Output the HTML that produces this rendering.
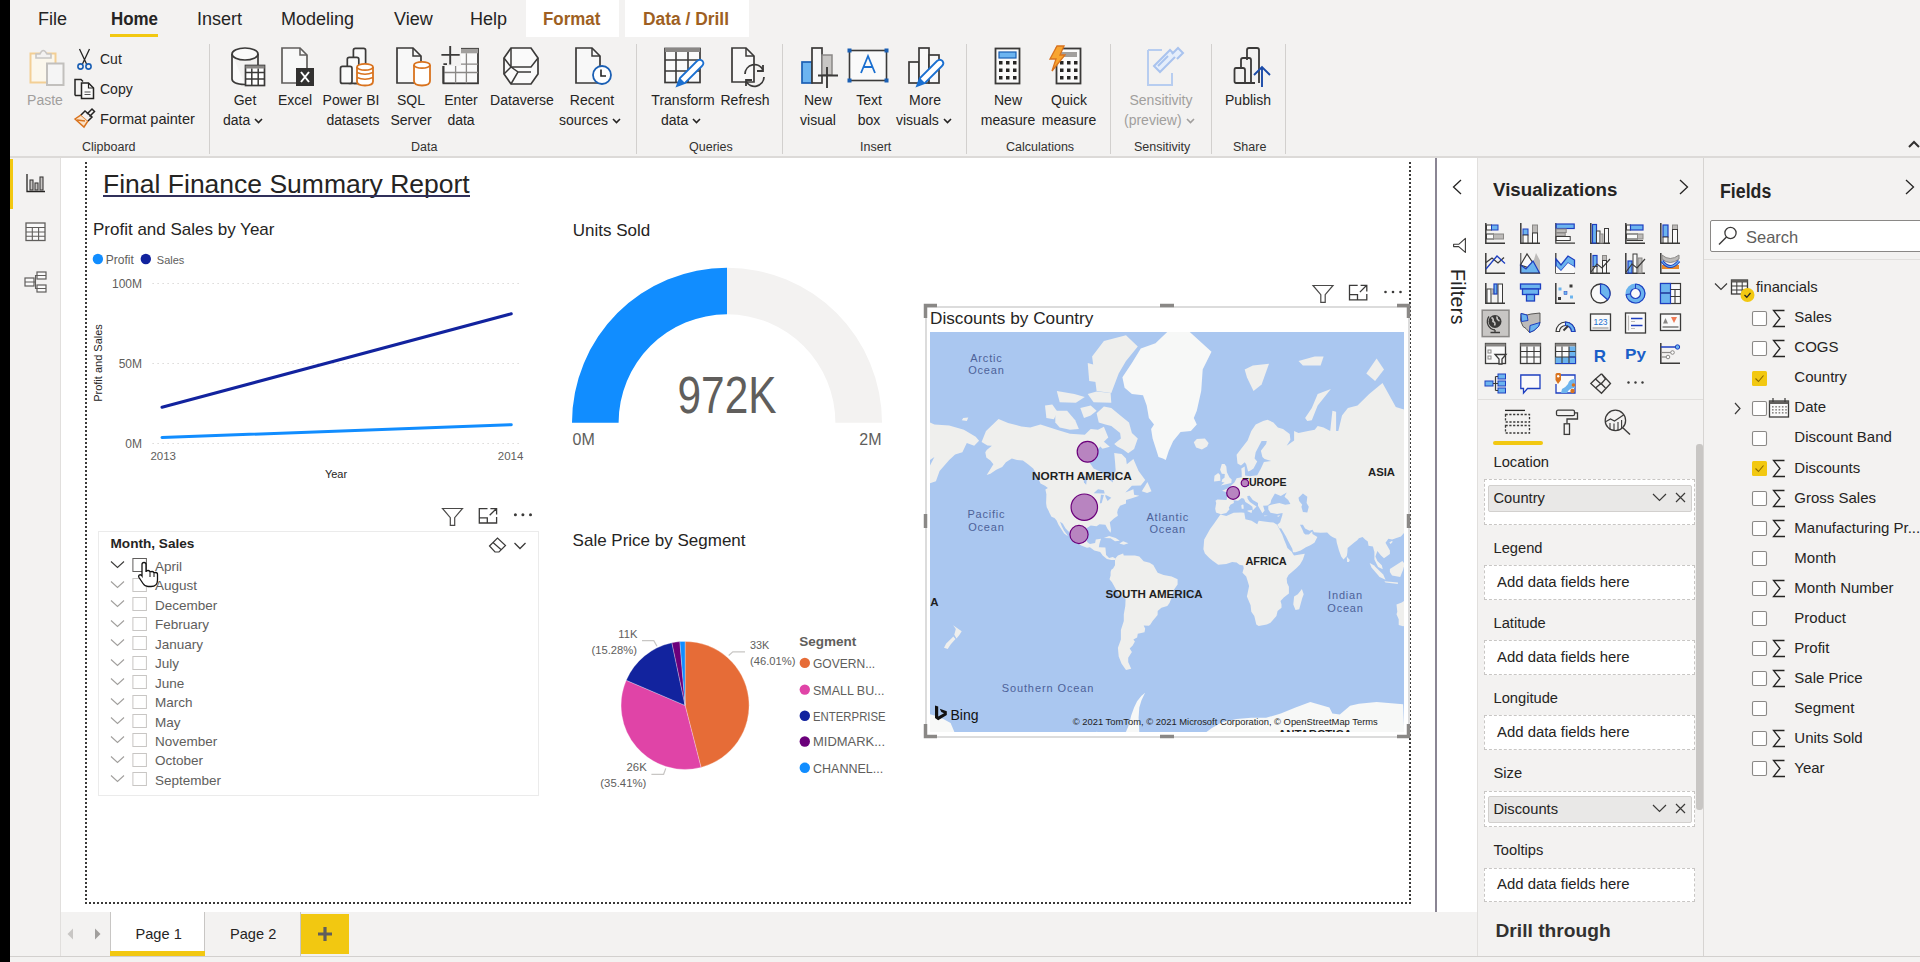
<!DOCTYPE html>
<html><head><meta charset="utf-8">
<style>
*{box-sizing:border-box}
html,body{margin:0;padding:0}
body{width:1920px;height:962px;overflow:hidden;position:relative;background:#f3f2f1;font-family:"Liberation Sans",sans-serif;color:#252423}
.a{position:absolute;white-space:nowrap}
.t14{font-size:14px;line-height:16px}
.rb{color:#252423}
.sep{position:absolute;top:44px;width:1px;height:110px;background:#d2d0ce}
.glbl{position:absolute;top:140px;font-size:12.5px;line-height:14px;color:#323130}
.tab{position:absolute;top:8px;font-size:18px;line-height:22px;color:#252423}
.dot{position:absolute;background:#252423}
</style></head><body>
<!-- black strip -->
<div class="a" style="left:0;top:0;width:10px;height:962px;background:#000"></div>
<!-- ribbon tabs -->
<div class="a" style="left:526px;top:0;width:93px;height:37px;background:#fff"></div>
<div class="a" style="left:625px;top:0;width:124px;height:37px;background:#fff"></div>
<div class="tab" style="left:38px">File</div>
<div class="tab" style="left:111px;font-weight:bold;font-size:18px;top:8px;transform:scaleX(0.94);transform-origin:0 0">Home</div>
<div class="a" style="left:110px;top:34px;width:48px;height:3px;background:#f2c811"></div>
<div class="tab" style="left:197px">Insert</div>
<div class="tab" style="left:281px">Modeling</div>
<div class="tab" style="left:394px">View</div>
<div class="tab" style="left:470px">Help</div>
<div class="tab" style="left:543px;font-weight:bold;font-size:18px;top:8px;color:#9e5f22;transform:scaleX(0.94);transform-origin:0 0">Format</div>
<div class="tab" style="left:643px;font-weight:bold;font-size:18px;top:8px;color:#9e5f22;transform:scaleX(0.966);transform-origin:0 0">Data / Drill</div>
<!-- ribbon bottom border -->
<div class="a" style="left:10px;top:156px;width:1910px;height:2px;background:#dcdad8"></div>
<!-- Clipboard -->
<svg class="a" style="left:28px;top:46px" width="38" height="42" viewBox="0 0 38 42">
 <rect x="2.5" y="7.5" width="25" height="29" fill="#fbf7ec" stroke="#f3cf95" stroke-width="2"/>
 <path d="M8 12 L8 8 L12 8 Q15 1 19 8 L23 8 L23 12 Z" fill="#f3f2f1" stroke="#c8c6c4" stroke-width="1.6"/>
 <rect x="19" y="17.5" width="16.5" height="21.5" fill="#f5f5f5" stroke="#c2c0bd" stroke-width="2"/>
</svg>
<div class="a t14" style="left:27px;top:92px;color:#a19f9d;width:36px;text-align:center;font-size:14px">Paste</div>
<svg class="a" style="left:76px;top:48px" width="17" height="23" viewBox="0 0 17 23">
 <path d="M3.5 1 L11 17 M13.5 1 L6 17" stroke="#252423" stroke-width="1.3" fill="none"/>
 <circle cx="4.5" cy="18.5" r="2.6" fill="none" stroke="#1a5fb4" stroke-width="1.6"/>
 <circle cx="12.5" cy="18.5" r="2.6" fill="none" stroke="#1a5fb4" stroke-width="1.6"/>
</svg>
<div class="a t14" style="left:100px;top:51px">Cut</div>
<svg class="a" style="left:73px;top:78px" width="23" height="22" viewBox="0 0 23 22">
 <path d="M2 17.5 L2 1.5 L8 1.5 L10 3.5" fill="none" stroke="#252423" stroke-width="1.5"/>
 <path d="M2 17.5 L8.5 17.5" stroke="#252423" stroke-width="1.5"/>
 <path d="M8.5 5 L15.5 5 L20.5 10 L20.5 20.5 L8.5 20.5 Z" fill="#fafafa" stroke="#252423" stroke-width="1.5"/>
 <path d="M15.5 5 L15.5 10 L20.5 10" fill="none" stroke="#252423" stroke-width="1.2"/>
 <path d="M11.5 14 L17.5 14 M11.5 16.5 L17.5 16.5" stroke="#555" stroke-width="1"/>
</svg>
<div class="a t14" style="left:100px;top:81px">Copy</div>
<svg class="a" style="left:73px;top:107px" width="23" height="23" viewBox="0 0 23 23">
 <path d="M2 12 L11 20 L15 14 L8 8 Z" fill="#fbe3c8" stroke="#d9731e" stroke-width="1.5"/>
 <path d="M4 13 L12 14" stroke="#d9731e" stroke-width="1.5"/>
 <path d="M8 8 L12 4 L19 10 L15 14" fill="#f3f2f1" stroke="#252423" stroke-width="1.5"/>
 <path d="M14 7 L19 2 L21.5 4.5 L16.5 9.5" fill="none" stroke="#252423" stroke-width="1.5"/>
</svg>
<div class="a t14" style="left:100px;top:111px;font-size:14.6px">Format painter</div>
<div class="glbl" style="left:82px">Clipboard</div>
<div class="sep" style="left:209px"></div>
<!-- Data group -->
<svg class="a" style="left:229px;top:46px" width="40" height="42" viewBox="0 0 40 42">
 <path d="M3 8 L3 33 Q3 38 16 38.5" fill="#fafafa" stroke="#3b3a39" stroke-width="1.7"/>
 <ellipse cx="16" cy="8" rx="13" ry="6" fill="#fafafa" stroke="#3b3a39" stroke-width="1.7"/>
 <path d="M29 8 L29 19" stroke="#3b3a39" stroke-width="1.7"/>
 <rect x="16.5" y="19.5" width="19" height="20" fill="#fff" stroke="#3b3a39" stroke-width="1.7"/>
 <rect x="16.5" y="19.5" width="19" height="3" fill="#8a8886"/>
 <path d="M16.5 26.5 H35.5 M16.5 33 H35.5 M22.8 22.5 V39.5 M29.2 22.5 V39.5" stroke="#3b3a39" stroke-width="1.5"/>
</svg>
<div class="a t14" style="left:205px;top:92px;width:80px;text-align:center">Get</div>
<div class="a t14" style="left:223px;top:112px">data<svg width="11" height="8" style="margin-left:3px" viewBox="0 0 11 8"><path d="M2 2 L5.5 5.5 L9 2" fill="none" stroke="#252423" stroke-width="1.6"/></svg></div>
<svg class="a" style="left:280px;top:46px" width="38" height="42" viewBox="0 0 38 42">
 <path d="M2 2 L20 2 L27 9 L27 37 L2 37 Z" fill="#f8f8f8" stroke="#605e5c" stroke-width="1.7"/>
 <path d="M20 2 L20 9 L27 9" fill="none" stroke="#605e5c" stroke-width="1.5"/>
 <rect x="16" y="22" width="18" height="18" fill="#323130"/>
 <path d="M21 26 L29 36 M29 26 L21 36" stroke="#fff" stroke-width="2"/>
</svg>
<div class="a t14" style="left:255px;top:92px;width:80px;text-align:center">Excel</div>
<svg class="a" style="left:339px;top:46px" width="36" height="42" viewBox="0 0 36 42">
 <rect x="14.4" y="2.4" width="12.2" height="35" rx="2" fill="#fafafa" stroke="#3b3a39" stroke-width="1.7"/>
 <rect x="8.3" y="11.3" width="11.5" height="26" rx="2" fill="#fafafa" stroke="#3b3a39" stroke-width="1.7"/>
 <rect x="1.5" y="20.4" width="11.5" height="17" rx="2" fill="#fafafa" stroke="#3b3a39" stroke-width="1.7"/>
 <path d="M18 21 L18 35.5 Q18 39.5 26 39.5 Q34 39.5 34 35.5 L34 21" fill="#fff" stroke="#d9731e" stroke-width="1.8"/>
 <ellipse cx="26" cy="21" rx="8" ry="3.2" fill="#fff" stroke="#d9731e" stroke-width="1.8"/>
 <path d="M18 26.5 Q26 30 34 26.5 M18 31.5 Q26 35 34 31.5" fill="none" stroke="#d9731e" stroke-width="1.6"/>
</svg>
<div class="a t14" style="left:311px;top:92px;width:80px;text-align:center">Power BI</div>
<div class="a t14" style="left:313px;top:112px;width:80px;text-align:center">datasets</div>
<svg class="a" style="left:395px;top:46px" width="38" height="42" viewBox="0 0 38 42">
 <path d="M2 2 L18 2 L26 10 L26 37 L2 37 Z" fill="#f8f8f8" stroke="#3b3a39" stroke-width="1.7"/>
 <path d="M18 2 L18 10 L26 10" fill="none" stroke="#3b3a39" stroke-width="1.5"/>
 <path d="M19 19 L19 35 Q19 39.5 27 39.5 Q35 39.5 35 35 L35 19" fill="#fff" stroke="#d9731e" stroke-width="1.8"/>
 <ellipse cx="27" cy="19" rx="8" ry="3.2" fill="#fff" stroke="#d9731e" stroke-width="1.8"/>
</svg>
<div class="a t14" style="left:371px;top:92px;width:80px;text-align:center">SQL</div>
<div class="a t14" style="left:371px;top:112px;width:80px;text-align:center">Server</div>
<svg class="a" style="left:439px;top:44px" width="42" height="44" viewBox="0 0 42 44">
 <rect x="4.4" y="4.8" width="34.6" height="34.5" fill="#fafafa" stroke="#3b3a39" stroke-width="1.8"/>
 <rect x="16" y="4.8" width="23" height="4.5" fill="#a19f9d"/>
 <path d="M4.4 20.1 H39 M4.4 28.5 H39 M16.6 9.3 V39.3 M27.4 9.3 V39.3" stroke="#8a8886" stroke-width="1.3"/>
 <rect x="0" y="0" width="22" height="22" fill="#f3f2f1"/>
 <path d="M4.4 22 V39.3 M4.4 20.1 H8" stroke="#3b3a39" stroke-width="1.8"/>
 <path d="M11.2 2 V20.4 M2.4 10.9 H20.7" stroke="#3b3a39" stroke-width="1.9"/>
</svg>
<div class="a t14" style="left:421px;top:92px;width:80px;text-align:center">Enter</div>
<div class="a t14" style="left:421px;top:112px;width:80px;text-align:center">data</div>
<svg class="a" style="left:501px;top:46px" width="40" height="40" viewBox="0 0 40 40">
 <path d="M10 2 L30 2 L37 12 L37 28 L30 38 L10 38 L3 28 L3 12 Z" fill="#fafafa" stroke="#3b3a39" stroke-width="1.7"/>
 <path d="M3 12 L10 21 L30 21 L37 12 M10 2 L10 21 M10 21 L3 28 M10 21 L17 26 L10 38 M17 26 L30 26" fill="none" stroke="#3b3a39" stroke-width="1.5"/>
</svg>
<div class="a t14" style="left:482px;top:92px;width:80px;text-align:center">Dataverse</div>
<svg class="a" style="left:574px;top:46px" width="40" height="42" viewBox="0 0 40 42">
 <path d="M2 2 L18 2 L26 10 L26 37 L2 37 Z" fill="#f8f8f8" stroke="#3b3a39" stroke-width="1.7"/>
 <path d="M18 2 L18 10 L26 10" fill="none" stroke="#3b3a39" stroke-width="1.5"/>
 <circle cx="28" cy="29" r="9" fill="#fff" stroke="#1a5fb4" stroke-width="1.8"/>
 <path d="M27 23.5 L27 30 L32 30" fill="none" stroke="#252423" stroke-width="1.6"/>
</svg>
<div class="a t14" style="left:552px;top:92px;width:80px;text-align:center">Recent</div>
<div class="a t14" style="left:559px;top:112px">sources<svg width="11" height="8" style="margin-left:3px" viewBox="0 0 11 8"><path d="M2 2 L5.5 5.5 L9 2" fill="none" stroke="#252423" stroke-width="1.6"/></svg></div>
<div class="glbl" style="left:411px">Data</div>
<div class="sep" style="left:636px"></div>
<!-- Queries -->
<svg class="a" style="left:663px;top:46px" width="42" height="42" viewBox="0 0 42 42">
 <rect x="2" y="2.5" width="35" height="34" fill="#fafafa" stroke="#3b3a39" stroke-width="1.7"/>
 <rect x="2" y="2" width="35" height="4" fill="#8a8886"/>
 <path d="M2 14 H37 M2 25 H37 M13 6 V36.5 M25 6 V36.5" stroke="#3b3a39" stroke-width="1.6"/>
 <path d="M14 40 L17 32 L34 15 Q37 12.5 39.5 15 Q41.5 17.5 39 20 L22 37 Z" fill="#fff" stroke="#1a6fd0" stroke-width="1.8"/>
 <path d="M14 40 L17 32 L22 37 Z" fill="#1a6fd0"/>
</svg>
<div class="a t14" style="left:643px;top:92px;width:80px;text-align:center">Transform</div>
<div class="a t14" style="left:661px;top:112px">data<svg width="11" height="8" style="margin-left:3px" viewBox="0 0 11 8"><path d="M2 2 L5.5 5.5 L9 2" fill="none" stroke="#252423" stroke-width="1.6"/></svg></div>
<svg class="a" style="left:730px;top:46px" width="38" height="42" viewBox="0 0 38 42">
 <path d="M2 2 L16 2 L24 10 L24 36 L2 36 Z" fill="#f8f8f8" stroke="#3b3a39" stroke-width="1.7"/>
 <path d="M16 2 L16 10 L24 10" fill="none" stroke="#3b3a39" stroke-width="1.5"/>
 <path d="M15 28 A9.5 9.5 0 0 1 33 24" fill="none" stroke="#3b3a39" stroke-width="1.8"/>
 <path d="M34 31 A9.5 9.5 0 0 1 16 35" fill="none" stroke="#3b3a39" stroke-width="1.8"/>
 <path d="M33 19 L33 25 L27 25" fill="none" stroke="#3b3a39" stroke-width="1.8"/>
 <path d="M16 40 L16 34 L22 34" fill="none" stroke="#3b3a39" stroke-width="1.8"/>
</svg>
<div class="a t14" style="left:705px;top:92px;width:80px;text-align:center">Refresh</div>
<div class="glbl" style="left:689px">Queries</div>
<div class="sep" style="left:782px"></div>
<!-- Insert -->
<svg class="a" style="left:800px;top:46px" width="40" height="42" viewBox="0 0 40 42">
 <rect x="2" y="16" width="10" height="21" fill="#6cb4f0" stroke="#1a5fb4" stroke-width="1.7"/>
 <rect x="12" y="2" width="10" height="35" fill="#f8f8f8" stroke="#3b3a39" stroke-width="1.7"/>
 <rect x="22" y="9" width="10" height="20" fill="#c8c6c4" stroke="#8a8886" stroke-width="1.5"/>
 <path d="M27 21 V42 M18 29.5 H38" stroke="#3b3a39" stroke-width="1.9"/>
</svg>
<div class="a t14" style="left:778px;top:92px;width:80px;text-align:center">New</div>
<div class="a t14" style="left:778px;top:112px;width:80px;text-align:center">visual</div>
<svg class="a" style="left:847px;top:48px" width="42" height="36" viewBox="0 0 42 36">
 <rect x="2.5" y="2.5" width="37" height="30" fill="#fafafa" stroke="#3b3a39" stroke-width="1.6"/>
 <rect x="0.5" y="0.5" width="4" height="4" fill="#1a5fb4"/><rect x="37.5" y="0.5" width="4" height="4" fill="#1a5fb4"/>
 <rect x="0.5" y="30.5" width="4" height="4" fill="#1a5fb4"/><rect x="37.5" y="30.5" width="4" height="4" fill="#1a5fb4"/>
 <path d="M14 25 L21 8 L28 25 M16.5 19 H25.5" fill="none" stroke="#1a6fd0" stroke-width="1.8"/>
</svg>
<div class="a t14" style="left:829px;top:92px;width:80px;text-align:center">Text</div>
<div class="a t14" style="left:829px;top:112px;width:80px;text-align:center">box</div>
<svg class="a" style="left:907px;top:46px" width="40" height="42" viewBox="0 0 40 42">
 <rect x="2" y="16" width="10" height="21" fill="#f8f8f8" stroke="#3b3a39" stroke-width="1.7"/>
 <rect x="12" y="2" width="10" height="35" fill="#f8f8f8" stroke="#3b3a39" stroke-width="1.7"/>
 <rect x="22" y="9" width="10" height="28" fill="#f8f8f8" stroke="#3b3a39" stroke-width="1.7"/>
 <path d="M10 40 L13 32 L30 15 Q33 12.5 35.5 15 Q37.5 17.5 35 20 L18 37 Z" fill="#fff" stroke="#1a6fd0" stroke-width="1.8"/>
 <path d="M10 40 L13 32 L18 37 Z" fill="#1a6fd0"/>
</svg>
<div class="a t14" style="left:885px;top:92px;width:80px;text-align:center">More</div>
<div class="a t14" style="left:896px;top:112px">visuals<svg width="11" height="8" style="margin-left:3px" viewBox="0 0 11 8"><path d="M2 2 L5.5 5.5 L9 2" fill="none" stroke="#252423" stroke-width="1.6"/></svg></div>
<div class="glbl" style="left:860px">Insert</div>
<div class="sep" style="left:966px"></div>
<!-- Calculations -->
<svg class="a" style="left:994px;top:47px" width="28" height="38" viewBox="0 0 28 38">
 <rect x="1.5" y="1.5" width="24" height="35" fill="#fafafa" stroke="#3b3a39" stroke-width="1.8"/>
 <rect x="5" y="5" width="17" height="6" fill="#6cb4f0" stroke="#1a5fb4" stroke-width="1.2"/>
 <g fill="#252423"><rect x="5" y="14" width="3.5" height="3.5"/><rect x="12" y="14" width="3.5" height="3.5"/><rect x="19" y="14" width="3.5" height="3.5"/>
 <rect x="5" y="21.5" width="3.5" height="3.5"/><rect x="12" y="21.5" width="3.5" height="3.5"/><rect x="19" y="21.5" width="3.5" height="3.5"/>
 <rect x="5" y="29" width="3.5" height="3.5"/><rect x="12" y="29" width="3.5" height="3.5"/><rect x="19" y="29" width="3.5" height="3.5"/></g>
</svg>
<div class="a t14" style="left:968px;top:92px;width:80px;text-align:center">New</div>
<div class="a t14" style="left:968px;top:112px;width:80px;text-align:center">measure</div>
<svg class="a" style="left:1048px;top:45px" width="36" height="40" viewBox="0 0 36 40">
 <rect x="8.5" y="3.5" width="24" height="35" fill="#fafafa" stroke="#3b3a39" stroke-width="1.8"/>
 <rect x="12" y="7" width="17" height="5" fill="#a19f9d"/>
 <g fill="#252423"><rect x="12" y="16" width="3.5" height="3.5"/><rect x="19" y="16" width="3.5" height="3.5"/><rect x="26" y="16" width="3.5" height="3.5"/>
 <rect x="12" y="23.5" width="3.5" height="3.5"/><rect x="19" y="23.5" width="3.5" height="3.5"/><rect x="26" y="23.5" width="3.5" height="3.5"/>
 <rect x="12" y="31" width="3.5" height="3.5"/><rect x="19" y="31" width="3.5" height="3.5"/><rect x="26" y="31" width="3.5" height="3.5"/></g>
 <path d="M9 1 L16 1 L12 10 L17 10 L4 26 L8 14 L2 14 Z" fill="#f8a530" stroke="#d9731e" stroke-width="1.3"/>
</svg>
<div class="a t14" style="left:1029px;top:92px;width:80px;text-align:center">Quick</div>
<div class="a t14" style="left:1029px;top:112px;width:80px;text-align:center">measure</div>
<div class="glbl" style="left:1006px">Calculations</div>
<div class="sep" style="left:1110px"></div>
<!-- Sensitivity -->
<svg class="a" style="left:1145px;top:45px" width="40" height="42" viewBox="0 0 40 42">
 <path d="M3 5 L17 5 M3 5 L3 40 L27 40 L27 28" fill="none" stroke="#b7cdf0" stroke-width="2"/>
 <path d="M9 21 L25 5 L31 11 L15 27 Z" fill="#e5eefb" stroke="#a9c3ee" stroke-width="2"/>
 <path d="M13 21 L23 11" stroke="#a9c3ee" stroke-width="2"/>
 <path d="M27 9 L33 3 L38 8 L32 14" fill="#e5eefb" stroke="#a9c3ee" stroke-width="2"/>
</svg>
<div class="a t14" style="left:1121px;top:92px;width:80px;text-align:center;color:#a19f9d">Sensitivity</div>
<div class="a t14" style="left:1124px;top:112px;color:#a19f9d">(preview)<svg width="11" height="8" style="margin-left:3px" viewBox="0 0 11 8"><path d="M2 2 L5.5 5.5 L9 2" fill="none" stroke="#a19f9d" stroke-width="1.6"/></svg></div>
<div class="glbl" style="left:1134px">Sensitivity</div>
<div class="sep" style="left:1211px"></div>
<!-- Share -->
<svg class="a" style="left:1233px;top:46px" width="38" height="42" viewBox="0 0 38 42">
 <path d="M14 14 L14 4 Q14 2 16 2 L24 2 Q26 2 26 4 L26 37" fill="none" stroke="#3b3a39" stroke-width="1.8"/>
 <path d="M8 22 L8 14 Q8 12 10 12 L16 12 Q18 12 18 14 L18 37" fill="none" stroke="#3b3a39" stroke-width="1.8"/>
 <path d="M22 37 L3 37 Q1.5 37 1.5 35 L1.5 24 Q1.5 22 3 22 L10 22 Q12 22 12 24 L12 37" fill="none" stroke="#3b3a39" stroke-width="1.8"/>
 <path d="M29 41 L29 22 M21 29 L29 21 L37 29" fill="none" stroke="#1a4aa8" stroke-width="1.9"/>
</svg>
<div class="a t14" style="left:1208px;top:92px;width:80px;text-align:center">Publish</div>
<div class="glbl" style="left:1233px">Share</div>
<div class="sep" style="left:1285px"></div>
<svg class="a" style="left:1906px;top:139px" width="14" height="10" viewBox="0 0 14 10"><path d="M3 8 L8 3 L13 8" fill="none" stroke="#323130" stroke-width="2"/></svg>

<!-- left nav -->
<div class="a" style="left:10px;top:158px;width:50px;height:798px;background:#f3f2f1"></div>
<div class="a" style="left:10px;top:159px;width:3px;height:50px;background:#f2c811"></div>
<div class="a" style="left:60px;top:158px;width:1px;height:798px;background:#e1dfdd"></div>
<svg class="a" style="left:24px;top:172px" width="24" height="22" viewBox="0 0 24 22">
 <path d="M3 2 V19.5 H21" fill="none" stroke="#252423" stroke-width="1.3"/>
 <rect x="6" y="8" width="3" height="10" fill="#c8c6c4" stroke="#3b3a39" stroke-width="1.1"/>
 <rect x="11" y="11" width="3" height="7" fill="#c8c6c4" stroke="#3b3a39" stroke-width="1.1"/>
 <rect x="16" y="5" width="3" height="13" fill="#c8c6c4" stroke="#3b3a39" stroke-width="1.1"/>
</svg>
<svg class="a" style="left:24px;top:221px" width="24" height="22" viewBox="0 0 24 22">
 <rect x="2" y="2" width="19" height="17.5" fill="#fafafa" stroke="#605e5c" stroke-width="1.3"/>
 <path d="M2 6.5 H21 M2 11 H21 M2 15.3 H21 M8.3 6.5 V19.5 M14.6 6.5 V19.5" stroke="#605e5c" stroke-width="1.1"/>
</svg>
<svg class="a" style="left:23px;top:269px" width="26" height="26" viewBox="0 0 26 26">
 <g fill="#fafafa" stroke="#605e5c" stroke-width="1.2">
 <rect x="2" y="9" width="9" height="8"/><rect x="14" y="3" width="9" height="7"/><rect x="14" y="16" width="9" height="7"/>
 </g>
 <path d="M2 13 H11 M14 6.5 H23 M14 19.5 H23 M11 13 H12.5 V6.5 H14 M12.5 13 V19.5 H14" fill="none" stroke="#605e5c" stroke-width="1.1"/>
</svg>

<!-- canvas -->
<div class="a" style="left:61px;top:158px;width:1374px;height:754px;background:#fff"></div>
<!-- dotted page border -->
<svg class="a" style="left:84px;top:160px" width="1330" height="746" viewBox="0 0 1330 746">
 <path d="M1326 2 V743 H2 V2" fill="none" stroke="#3b3a39" stroke-width="2" stroke-dasharray="2 2"/>
</svg>
<!-- title -->
<div class="a" style="left:103px;top:169px;font-size:26.5px;line-height:30px;color:#252423">Final Finance Summary Report</div>
<div class="a" style="left:103px;top:195px;width:367px;height:2px;background:#30305a"></div>
<!-- line chart -->
<div class="a" style="left:93px;top:220px;font-size:17px;line-height:20px;color:#252423">Profit and Sales by Year</div>
<svg class="a" style="left:86px;top:245px" width="460" height="240" viewBox="0 0 460 240">
 <circle cx="11.9" cy="14" r="5.2" fill="#118dff"/>
 <text x="19.8" y="19" font-size="12" fill="#605e5c" font-family="Liberation Sans">Profit</text>
 <circle cx="59.8" cy="14" r="5.2" fill="#12239e"/>
 <text x="70.8" y="19" font-size="11" fill="#605e5c" font-family="Liberation Sans">Sales</text>
 <g stroke="#c8c6c4" stroke-width="1" stroke-dasharray="1 4">
  <path d="M66.6 38.5 H434"/><path d="M66.6 118.5 H434"/><path d="M66.6 198.5 H434"/>
 </g>
 <g font-size="12" fill="#605e5c" font-family="Liberation Sans" text-anchor="end">
  <text x="56" y="43">100M</text><text x="56" y="123">50M</text><text x="56" y="203">0M</text>
 </g>
 <path d="M76 162.3 L425.3 68.8" stroke="#12239e" stroke-width="3" stroke-linecap="round"/>
 <path d="M76 192.5 L425.3 179.7" stroke="#118dff" stroke-width="3" stroke-linecap="round"/>
 <g font-size="11.5" fill="#605e5c" font-family="Liberation Sans">
  <text x="64.4" y="215">2013</text><text x="411.8" y="215">2014</text>
 </g>
 <text x="250" y="232.5" font-size="11" fill="#252423" font-family="Liberation Sans" text-anchor="middle">Year</text>
 <text transform="translate(15.5 118) rotate(-90)" font-size="11" fill="#252423" font-family="Liberation Sans" text-anchor="middle">Profit and Sales</text>
</svg>
<!-- gauge -->
<div class="a" style="left:572.7px;top:220.5px;font-size:17px;line-height:20px;color:#252423">Units Sold</div>
<svg class="a" style="left:560px;top:260px" width="340" height="200" viewBox="0 0 340 200">
 <path d="M12 162.7 A155 155 0 0 1 167 7.7 L167 54.3 A108.4 108.4 0 0 0 58.6 162.7 Z" fill="#118dff"/>
 <path d="M167 7.7 A155 155 0 0 1 322 162.7 L275.4 162.7 A108.4 108.4 0 0 0 167 54.3 Z" fill="#f3f2f1"/>
 <text x="167" y="153" font-size="51" fill="#605e5c" font-family="Liberation Sans" text-anchor="middle" textLength="99" lengthAdjust="spacingAndGlyphs">972K</text>
 <text x="12.5" y="185.4" font-size="16" fill="#605e5c" font-family="Liberation Sans">0M</text>
 <text x="321.5" y="185.4" font-size="16" fill="#605e5c" font-family="Liberation Sans" text-anchor="end">2M</text>
</svg>
<!-- slicer -->
<svg class="a" style="left:438px;top:504px" width="100" height="26" viewBox="0 0 100 26">
 <path d="M4.5 4.5 H24.5 L16.7 13.6 V21.4 H12.3 V13.6 Z" fill="none" stroke="#4a4948" stroke-width="1.2"/>
 <path d="M49.5 4.6 H41.3 V19 H58.6 V13.1 M52.4 4.6 H58.6 V10.6 M41.3 13.9 H49.3 V19 M51.7 11.3 L58 5" fill="none" stroke="#3b3a39" stroke-width="1.3"/>
 <g fill="#3b3a39"><circle cx="77.4" cy="10.8" r="1.5"/><circle cx="84.9" cy="10.8" r="1.5"/><circle cx="92.5" cy="10.8" r="1.5"/></g>
</svg>
<div class="a" style="left:97.5px;top:530.5px;width:441px;height:265.5px;border:1px solid #ebebeb"></div>
<div class="a" style="left:110.5px;top:536px;font-size:13.6px;line-height:16px;font-weight:bold;color:#252423">Month, Sales</div>
<svg class="a" style="left:486px;top:535px" width="44" height="20" viewBox="0 0 44 20">
 <path d="M3.5 11 L11.5 3 L19.5 10.5 L13 17 H9 Z M7 7.5 L15.5 15" fill="none" stroke="#3b3a39" stroke-width="1.2"/>
 <path d="M28.5 8 L34 13.5 L39.5 8" fill="none" stroke="#3b3a39" stroke-width="1.3"/>
</svg>
<svg class="a" style="left:109px;top:558.4px" width="40" height="15" viewBox="0 0 40 15"><path d="M2 3.5 L8.5 9.5 L15 3.5" fill="none" stroke="#3b3a39" stroke-width="1.1"/><rect x="23.9" y="0.5" width="13.5" height="13" fill="#fff" stroke="#605e5c" stroke-width="1"/></svg>
<div class="a" style="left:155px;top:558.9px;font-size:13.5px;line-height:16px;color:#605e5c">April</div>
<svg class="a" style="left:109px;top:577.9px" width="40" height="15" viewBox="0 0 40 15"><path d="M2 3.5 L8.5 9.5 L15 3.5" fill="none" stroke="#a19f9d" stroke-width="1.1"/><rect x="23.9" y="0.5" width="13.5" height="13" fill="#fff" stroke="#c8c6c4" stroke-width="1"/></svg>
<div class="a" style="left:155px;top:578.4px;font-size:13.5px;line-height:16px;color:#605e5c">August</div>
<svg class="a" style="left:109px;top:597.3px" width="40" height="15" viewBox="0 0 40 15"><path d="M2 3.5 L8.5 9.5 L15 3.5" fill="none" stroke="#a19f9d" stroke-width="1.1"/><rect x="23.9" y="0.5" width="13.5" height="13" fill="#fff" stroke="#c8c6c4" stroke-width="1"/></svg>
<div class="a" style="left:155px;top:597.8px;font-size:13.5px;line-height:16px;color:#605e5c">December</div>
<svg class="a" style="left:109px;top:616.8px" width="40" height="15" viewBox="0 0 40 15"><path d="M2 3.5 L8.5 9.5 L15 3.5" fill="none" stroke="#a19f9d" stroke-width="1.1"/><rect x="23.9" y="0.5" width="13.5" height="13" fill="#fff" stroke="#c8c6c4" stroke-width="1"/></svg>
<div class="a" style="left:155px;top:617.2px;font-size:13.5px;line-height:16px;color:#605e5c">February</div>
<svg class="a" style="left:109px;top:636.2px" width="40" height="15" viewBox="0 0 40 15"><path d="M2 3.5 L8.5 9.5 L15 3.5" fill="none" stroke="#a19f9d" stroke-width="1.1"/><rect x="23.9" y="0.5" width="13.5" height="13" fill="#fff" stroke="#c8c6c4" stroke-width="1"/></svg>
<div class="a" style="left:155px;top:636.7px;font-size:13.5px;line-height:16px;color:#605e5c">January</div>
<svg class="a" style="left:109px;top:655.6px" width="40" height="15" viewBox="0 0 40 15"><path d="M2 3.5 L8.5 9.5 L15 3.5" fill="none" stroke="#a19f9d" stroke-width="1.1"/><rect x="23.9" y="0.5" width="13.5" height="13" fill="#fff" stroke="#c8c6c4" stroke-width="1"/></svg>
<div class="a" style="left:155px;top:656.1px;font-size:13.5px;line-height:16px;color:#605e5c">July</div>
<svg class="a" style="left:109px;top:675.1px" width="40" height="15" viewBox="0 0 40 15"><path d="M2 3.5 L8.5 9.5 L15 3.5" fill="none" stroke="#a19f9d" stroke-width="1.1"/><rect x="23.9" y="0.5" width="13.5" height="13" fill="#fff" stroke="#c8c6c4" stroke-width="1"/></svg>
<div class="a" style="left:155px;top:675.6px;font-size:13.5px;line-height:16px;color:#605e5c">June</div>
<svg class="a" style="left:109px;top:694.5px" width="40" height="15" viewBox="0 0 40 15"><path d="M2 3.5 L8.5 9.5 L15 3.5" fill="none" stroke="#a19f9d" stroke-width="1.1"/><rect x="23.9" y="0.5" width="13.5" height="13" fill="#fff" stroke="#c8c6c4" stroke-width="1"/></svg>
<div class="a" style="left:155px;top:695.0px;font-size:13.5px;line-height:16px;color:#605e5c">March</div>
<svg class="a" style="left:109px;top:714.0px" width="40" height="15" viewBox="0 0 40 15"><path d="M2 3.5 L8.5 9.5 L15 3.5" fill="none" stroke="#a19f9d" stroke-width="1.1"/><rect x="23.9" y="0.5" width="13.5" height="13" fill="#fff" stroke="#c8c6c4" stroke-width="1"/></svg>
<div class="a" style="left:155px;top:714.5px;font-size:13.5px;line-height:16px;color:#605e5c">May</div>
<svg class="a" style="left:109px;top:733.4px" width="40" height="15" viewBox="0 0 40 15"><path d="M2 3.5 L8.5 9.5 L15 3.5" fill="none" stroke="#a19f9d" stroke-width="1.1"/><rect x="23.9" y="0.5" width="13.5" height="13" fill="#fff" stroke="#c8c6c4" stroke-width="1"/></svg>
<div class="a" style="left:155px;top:733.9px;font-size:13.5px;line-height:16px;color:#605e5c">November</div>
<svg class="a" style="left:109px;top:752.9px" width="40" height="15" viewBox="0 0 40 15"><path d="M2 3.5 L8.5 9.5 L15 3.5" fill="none" stroke="#a19f9d" stroke-width="1.1"/><rect x="23.9" y="0.5" width="13.5" height="13" fill="#fff" stroke="#c8c6c4" stroke-width="1"/></svg>
<div class="a" style="left:155px;top:753.4px;font-size:13.5px;line-height:16px;color:#605e5c">October</div>
<svg class="a" style="left:109px;top:772.3px" width="40" height="15" viewBox="0 0 40 15"><path d="M2 3.5 L8.5 9.5 L15 3.5" fill="none" stroke="#a19f9d" stroke-width="1.1"/><rect x="23.9" y="0.5" width="13.5" height="13" fill="#fff" stroke="#c8c6c4" stroke-width="1"/></svg>
<div class="a" style="left:155px;top:772.8px;font-size:13.5px;line-height:16px;color:#605e5c">September</div>
<svg class="a" style="left:137px;top:561px" width="22" height="28" viewBox="0 0 22 28">
 <path d="M5 15 V3.5 Q5 1.5 7 1.5 Q9 1.5 9 3.5 V11 Q9 9.5 11 9.5 Q13 9.5 13 11.5 Q13 10.5 15 10.5 Q17 10.5 17 12.5 Q17 11.5 18.8 11.5 Q20.5 11.5 20.5 13.5 V19 Q20.5 25.5 14 25.5 H11 Q8 25.5 6 22.5 L2 16.5 Q1 14.5 2.8 13.8 Q4 13.5 5 15 Z" fill="#fff" stroke="#111" stroke-width="1.3"/>
 <path d="M13 11.5 V16 M17 12.5 V16" stroke="#111" stroke-width="1"/>
</svg>
<!-- pie -->
<div class="a" style="left:572.6px;top:531.3px;font-size:17px;line-height:20px;color:#252423">Sale Price by Segment</div>
<svg class="a" style="left:560px;top:620px" width="340" height="180" viewBox="0 0 340 180">
<path d="M125.10 85.40 L125.10 21.40 A64 64 0 0 1 141.02 147.39 Z" fill="#e66c37" stroke="rgba(255,255,255,0.55)" stroke-width="0.5"/>
<path d="M125.10 85.40 L141.02 147.39 A64 64 0 0 1 66.23 60.29 Z" fill="#e044a7" stroke="rgba(255,255,255,0.55)" stroke-width="0.5"/>
<path d="M125.10 85.40 L66.23 60.29 A64 64 0 0 1 111.90 22.78 Z" fill="#12239e" stroke="rgba(255,255,255,0.55)" stroke-width="0.5"/>
<path d="M125.10 85.40 L111.90 22.78 A64 64 0 0 1 119.86 21.62 Z" fill="#6b007b" stroke="rgba(255,255,255,0.55)" stroke-width="0.5"/>
<path d="M125.10 85.40 L119.86 21.62 A64 64 0 0 1 125.10 21.40 Z" fill="#118dff" stroke="rgba(255,255,255,0.55)" stroke-width="0.5"/>
<g fill="none" stroke="#c8c6c4" stroke-width="1.2">
<path d="M82.0 20.6 H93.8 L97.0 26.2"/>
<path d="M168.7 35.5 L172.8 31.8 H185.0"/>
<path d="M91.4 154.3 H103.6 L105.8 148.4"/>
</g>
<g font-family="Liberation Sans" font-size="11.7" fill="#605e5c">
<text x="58.3" y="18.1" textLength="19.1" lengthAdjust="spacingAndGlyphs">11K</text>
<text x="31.5" y="33.7" textLength="45.5" lengthAdjust="spacingAndGlyphs">(15.28%)</text>
<text x="190.0" y="29.0" textLength="19.3" lengthAdjust="spacingAndGlyphs">33K</text>
<text x="190.0" y="44.9" textLength="45.5" lengthAdjust="spacingAndGlyphs">(46.01%)</text>
<text x="66.5" y="150.6" textLength="20.2" lengthAdjust="spacingAndGlyphs">26K</text>
<text x="40.3" y="167.4" textLength="46.1" lengthAdjust="spacingAndGlyphs">(35.41%)</text>
</g>
<text x="239.2" y="25.8" font-family="Liberation Sans" font-size="12.5" font-weight="bold" fill="#605e5c" textLength="57" lengthAdjust="spacingAndGlyphs">Segment</text>
<circle cx="244.8" cy="42.9" r="5.2" fill="#e66c37"/>
<text x="253.0" y="47.8" font-family="Liberation Sans" font-size="13" fill="#605e5c" textLength="62.2" lengthAdjust="spacingAndGlyphs">GOVERN...</text>
<circle cx="244.8" cy="69.6" r="5.2" fill="#e044a7"/>
<text x="253.0" y="74.5" font-family="Liberation Sans" font-size="13" fill="#605e5c" textLength="71.5" lengthAdjust="spacingAndGlyphs">SMALL BU...</text>
<circle cx="244.8" cy="95.7" r="5.2" fill="#12239e"/>
<text x="253.0" y="100.6" font-family="Liberation Sans" font-size="13" fill="#605e5c" textLength="72.7" lengthAdjust="spacingAndGlyphs">ENTERPRISE</text>
<circle cx="244.8" cy="121.5" r="5.2" fill="#6b007b"/>
<text x="253.0" y="126.4" font-family="Liberation Sans" font-size="13" fill="#605e5c" textLength="72.0" lengthAdjust="spacingAndGlyphs">MIDMARK...</text>
<circle cx="244.8" cy="147.8" r="5.2" fill="#118dff"/>
<text x="253.0" y="152.7" font-family="Liberation Sans" font-size="13" fill="#605e5c" textLength="70.2" lengthAdjust="spacingAndGlyphs">CHANNEL...</text>
</svg>
<!-- map visual -->
<svg class="a" style="left:1308px;top:280px" width="100" height="26" viewBox="0 0 100 26">
 <path d="M5 5.5 H25 L17.2 14.6 V22.4 H12.8 V14.6 Z" fill="none" stroke="#4a4948" stroke-width="1.2"/>
 <path d="M49.7 5.4 H41.5 V19.8 H58.8 V13.9 M52.6 5.4 H58.8 V11.4 M41.5 14.7 H49.5 V19.8 M51.9 12.1 L58.2 5.8" fill="none" stroke="#3b3a39" stroke-width="1.3"/>
 <g fill="#3b3a39"><circle cx="77.5" cy="12" r="1.3"/><circle cx="85" cy="12" r="1.3"/><circle cx="92.5" cy="12" r="1.3"/></g>
</svg>
<div class="a" style="left:924.5px;top:305.5px;width:485px;height:432px;border:2px solid #dcdcdc"></div>
<div class="a" style="left:930px;top:307.5px;font-size:17.2px;line-height:20px;color:#252423">Discounts by Country</div>
<div class="a" style="left:930px;top:332px;width:474px;height:400px;overflow:hidden;background:#aac7f0">
<svg width="474" height="400" viewBox="0 0 474 400" style="position:absolute;left:0;top:0">
<path d="M51.6 109.9L56.0 98.9L68.5 86.9L78.1 90.9L91.4 94.4L100.2 95.6L110.5 92.6L126.8 97.7L140.0 101.7L154.8 102.8L160.7 96.9L168.0 97.7L173.9 94.8L178.3 105.5L172.5 110.9L169.5 115.4L162.1 121.9L159.9 130.9L163.6 136.5L173.9 141.2L178.3 146.7L182.8 150.4L182.8 143.0L185.7 139.1L185.0 129.4L184.2 121.0L191.6 121.9L196.0 126.5L196.8 132.3L203.4 127.1L208.6 139.1L215.2 148.0L210.8 153.4L201.9 153.8L195.3 160.5L203.4 157.2L204.1 162.7L209.3 163.7L201.9 166.2L196.0 167.9L196.0 171.5L190.1 173.8L187.9 177.6L187.2 180.4L187.9 183.7L184.2 186.2L179.8 190.2L181.0 197.8L180.6 200.8L177.6 197.0L175.4 192.8L169.5 192.3L166.6 194.2L160.7 193.5L155.9 196.7L155.5 202.7L155.5 206.7L157.7 210.4L159.9 211.9L165.1 211.0L165.8 207.5L171.0 206.7L169.5 211.4L168.8 215.3L175.4 215.6L176.1 222.9L179.1 225.9L182.8 225.1L185.3 226.6L185.0 228.1L181.3 228.1L176.9 226.9L172.7 223.6L170.2 219.9L164.3 218.4L159.9 215.3L157.0 215.8L151.8 213.8L143.7 209.1L143.7 205.1L140.0 201.1L135.6 196.5L132.7 191.4L130.0 189.7L131.9 194.5L134.1 198.7L137.1 202.7L137.8 204.2L134.1 201.4L130.9 196.5L128.5 192.8L126.6 188.5L124.5 185.9L121.5 184.8L119.4 180.8L118.7 178.9L116.7 175.2L116.1 170.9L116.4 162.2L115.4 157.5L117.9 156.1L115.0 153.8L110.5 151.5L106.9 143.0L103.2 136.5L98.0 132.3L92.9 128.6L87.0 128.0L81.8 126.5L75.9 130.3L72.2 135.1L66.3 137.8L60.4 141.7L56.7 143.0L63.4 132.3L60.4 128.6L56.3 125.6L55.3 120.3L56.7 118.1L61.9 113.7L57.5 113.4Z" fill="#efefed"/>
<path d="M185.3 226.6L187.9 223.6L193.1 221.4L193.8 223.6L199.0 223.6L204.9 223.5L209.3 224.4L213.7 229.2L219.6 230.8L223.3 233.0L225.5 237.0L227.7 240.7L233.6 242.9L241.7 244.4L247.6 247.3L247.6 252.5L243.9 257.8L241.7 265.4L239.5 270.9L237.3 274.0L231.4 275.7L227.7 278.9L227.6 283.1L222.6 289.0L220.4 292.5L218.9 293.8L213.7 293.4L215.2 296.7L214.5 300.2L207.8 301.7L207.1 305.6L203.4 307.5L204.9 309.5L202.7 313.6L199.7 316.4L201.9 320.1L198.2 325.7L198.2 330.0L201.2 336.7L196.0 338.0L191.6 331.7L188.7 324.6L187.9 315.7L190.9 307.5L190.9 298.0L193.8 289.0L193.8 282.2L195.3 274.0L195.6 266.8L188.7 262.3L185.7 257.0L182.0 250.3L179.5 247.3L180.6 243.6L180.6 239.9L181.3 237.7L183.1 236.5L185.0 233.3L185.0 228.4Z" fill="#efefed"/>
<path d="M290.4 182.6L284.5 191.1L280.1 197.0L274.2 207.5L273.4 217.3L274.9 221.4L279.3 225.9L283.0 228.9L288.2 232.7L296.3 232.1L302.2 229.9L306.6 230.6L309.5 232.7L313.2 233.6L313.7 236.3L312.5 240.7L316.2 244.4L317.3 248.1L319.1 254.0L316.9 264.6L320.6 273.3L321.3 279.7L324.3 283.9L326.3 292.5L328.7 294.0L336.8 292.5L340.5 290.8L346.4 283.9L347.6 278.9L351.5 275.7L351.5 272.5L350.5 269.0L353.8 265.4L358.9 261.6L358.9 254.8L357.1 251.0L356.7 246.6L358.5 242.9L361.1 240.7L366.3 236.3L370.0 232.6L372.9 227.4L374.8 221.7L370.0 222.4L364.1 223.6L362.9 222.1L361.9 219.9L357.4 216.1L356.0 212.2L354.0 207.5L352.3 202.7L349.3 197.0L347.1 192.8L343.4 190.6L336.1 189.7L328.7 188.8L327.2 192.3L321.6 188.8L315.4 187.3L314.3 180.8L311.0 180.4L303.6 180.8L296.3 183.9Z" fill="#efefed"/>
<path d="M291.0 182.3L286.0 180.4L285.2 176.7L286.2 170.9L285.5 168.7L287.4 167.4L296.6 168.1L297.4 162.7L296.0 160.1L292.1 158.8L297.0 156.8L299.2 155.2L301.4 153.2L304.4 150.6L306.6 146.3L311.7 145.3L311.7 140.4L311.3 136.5L314.7 134.5L315.1 143.5L319.9 144.3L327.2 143.3L330.9 136.5L333.9 130.0L341.2 128.9L334.6 127.1L332.4 125.0L330.9 118.7L336.1 112.0L336.8 109.1L331.6 109.1L325.7 120.3L324.6 126.5L327.2 129.4L323.5 136.5L320.6 138.6L318.1 139.4L316.2 132.3L314.7 130.3L311.0 133.4L307.5 131.5L306.6 122.8L311.0 117.1L317.6 108.4L321.3 98.9L325.7 92.6L333.1 89.1L337.5 87.8L343.4 90.5L347.9 95.6L353.0 96.9L359.7 102.0L360.4 107.7L356.7 113.7L364.1 108.4L364.1 98.9L368.5 100.9L378.1 98.9L384.7 97.7L387.7 93.9L393.6 95.6L400.2 98.9L402.4 78.7L406.1 79.7L406.1 98.9L408.3 98.9L412.0 83.6L417.9 76.1L427.5 73.5L439.2 62.1L452.5 51.1L465.8 75.1L473.1 77.2L487.9 81.2L490.8 88.2L505.6 82.1L520.3 85.9L535.1 92.6L549.8 93.5L564.5 97.7L576.3 104.7L579.7 108.8L574.9 113.7L567.5 110.9L563.1 120.3L555.7 122.5L549.8 128.0L540.2 139.1L536.5 149.2L530.0 151.5L529.2 136.5L535.1 125.0L527.7 130.0L523.3 130.9L510.0 130.0L501.9 144.3L506.3 149.2L505.6 158.3L498.2 167.9L492.3 169.9L490.1 180.4L486.4 185.0L485.4 179.5L482.7 174.8L478.3 176.7L479.8 180.4L476.8 182.3L478.8 191.1L476.1 198.7L470.9 204.4L462.1 207.5L458.4 206.7L455.5 210.7L459.9 218.4L459.9 222.1L454.0 226.3L451.0 223.6L447.4 219.1L445.4 224.4L447.4 228.9L451.8 233.3L452.8 237.3L448.1 235.1L444.4 227.4L444.4 219.9L442.9 214.5L438.5 213.8L437.8 209.4L435.1 207.5L432.6 205.1L428.9 206.3L427.2 208.3L424.5 210.2L417.6 216.1L417.4 219.9L416.8 223.9L413.5 227.4L411.2 224.4L409.0 218.4L406.8 210.7L406.2 206.7L402.4 205.1L400.2 203.5L397.2 200.5L390.6 200.8L384.0 200.3L382.5 197.8L379.5 198.7L375.1 196.5L372.9 192.8L370.0 192.8L372.9 198.7L373.7 201.1L375.3 202.4L378.8 202.4L382.2 199.5L382.5 201.9L387.4 205.1L384.4 210.7L380.3 213.3L375.9 215.3L370.7 218.4L365.5 220.2L363.0 220.2L362.3 216.8L358.2 209.1L356.0 204.4L351.1 196.2L349.6 196.5L347.3 192.8L350.1 190.2L350.8 188.0L352.3 183.2L352.6 181.0L347.1 181.9L340.5 180.8L338.3 177.6L338.3 173.8L342.0 172.4L349.3 170.9L355.2 172.8L360.4 171.9L358.2 168.1L354.5 164.8L356.7 160.5L350.8 164.1L347.9 162.7L344.9 161.6L343.0 164.8L341.2 167.9L340.5 171.3L337.5 173.6L333.1 173.8L334.6 178.6L332.4 181.3L330.2 177.6L328.0 173.8L328.0 170.9L322.8 167.9L319.6 163.7L317.3 164.1L317.6 166.8L319.9 169.9L322.8 171.9L326.5 174.4L324.3 176.7L322.8 178.6L322.4 174.8L319.9 172.8L315.4 169.9L314.0 166.8L311.7 166.0L308.1 168.7L303.6 168.3L303.9 171.1L300.4 172.8L298.8 175.7L299.5 177.3L296.3 181.0Z" fill="#efefed"/>
<path d="M371.9 257.0L373.7 262.3L372.2 266.2L369.2 277.3L365.5 278.1L363.3 272.5L364.1 264.6L367.8 262.3Z" fill="#efefed"/>
<path d="M181.3 76.1L191.6 84.5L199.0 90.5L201.9 100.9L207.8 106.6L204.1 117.1L198.2 121.3L193.1 117.4L187.2 114.4L184.2 112.0L190.9 106.6L190.1 100.9L181.3 93.9L175.4 92.6L168.8 90.5L166.6 81.2L173.9 74.6Z" fill="#efefed"/>
<path d="M125.3 78.7L137.1 78.7L145.2 88.2L148.9 96.9L140.0 97.7L129.7 95.6L125.3 90.5Z" fill="#efefed"/>
<path d="M116.4 85.9L115.0 73.5L122.3 72.4L127.5 79.7L123.8 87.3Z" fill="#efefed"/>
<path d="M166.6 59.0L181.3 60.9L188.7 41.6L196.0 29.1L207.8 14.5L196.0 3.2L173.9 9.1L162.1 24.5Z" fill="#efefed"/>
<path d="M163.6 70.2L181.3 70.8L180.6 60.9L166.6 59.6L157.7 62.1Z" fill="#efefed"/>
<path d="M172.5 108.4L179.8 114.7L172.5 116.7L169.5 113.7Z" fill="#efefed"/>
<path d="M150.3 76.1L160.7 73.5L166.6 78.7L160.7 83.6L154.0 85.9Z" fill="#efefed"/>
<path d="M126.8 59.0L144.4 62.1L154.8 65.1L145.9 70.8L129.7 70.2Z" fill="#efefed"/>
<path d="M157.7 30.9L172.5 35.1L169.5 50.4L159.2 49.0Z" fill="#efefed"/>
<path d="M211.8 159.2L217.4 150.1L221.5 159.2L217.1 161.0Z" fill="#efefed"/>
<path d="M173.9 206.1L179.1 204.0L185.7 205.9L189.8 208.8L185.0 209.3L180.6 206.3Z" fill="#efefed"/>
<path d="M189.4 211.4L193.1 209.3L198.4 211.3L193.8 212.8Z" fill="#efefed"/>
<path d="M266.1 115.4L263.8 110.2L266.8 107.0L274.9 106.6L278.6 110.9L277.1 114.4L271.9 117.4Z" fill="#efefed"/>
<path d="M290.8 153.6L301.3 151.1L301.7 147.5L299.5 145.5L296.9 140.2L296.3 134.5L294.6 132.0L291.8 132.0L290.1 137.8L291.8 141.7L294.8 142.0L294.5 145.8L292.3 147.2L291.6 149.9L294.5 150.6Z" fill="#efefed"/>
<path d="M290.4 148.7L290.1 143.0L288.2 141.0L284.5 143.8L284.0 149.6Z" fill="#efefed"/>
<path d="M314.7 37.6L322.8 33.5L339.0 31.7L331.6 52.4L323.5 59.0L316.9 45.3Z" fill="#efefed"/>
<path d="M375.1 85.9L381.8 76.1L387.7 62.1L400.9 57.1L387.7 73.5L381.8 88.2L377.3 89.1Z" fill="#efefed"/>
<path d="M436.3 41.6L446.6 26.4L454.0 37.6L445.1 49.0Z" fill="#efefed"/>
<path d="M416.8 224.7L419.8 228.1L418.9 230.0L417.1 230.0Z" fill="#efefed"/>
<path d="M439.7 230.9L443.7 233.3L453.2 242.4L455.5 247.8L449.6 245.1L441.5 235.5Z" fill="#efefed"/>
<path d="M454.3 249.2L468.0 250.6L467.8 252.1L455.5 250.6Z" fill="#efefed"/>
<path d="M459.9 237.0L472.4 228.9L474.6 231.8L473.1 237.7L470.2 245.1L462.1 243.6L459.9 239.9Z" fill="#efefed"/>
<path d="M312.5 172.4L313.4 172.8L313.7 176.7L311.7 176.7L311.3 173.2Z" fill="#efefed"/>
<path d="M317.6 178.4L322.2 178.0L321.5 181.0L317.5 179.3Z" fill="#efefed"/>
<path d="M333.9 183.5L338.0 183.7L334.6 184.2Z" fill="#efefed"/>
<path d="M346.8 184.1L350.1 183.0L348.6 184.8Z" fill="#efefed"/>
<path d="M384.7 24.5L393.6 24.5L390.6 33.5L372.9 33.5L368.5 29.1Z" fill="#efefed"/>
<path d="M461.7 209.1L462.8 209.7L460.6 211.9L459.3 210.4Z" fill="#efefed"/>
<path d="M192.4 45.3L201.9 30.9L210.8 16.6L225.5 11.3L240.3 -3.0L255.0 -4.4L269.7 9.1L281.5 19.7L272.7 37.6L271.2 59.0L266.8 78.7L263.8 85.9L266.8 92.6L260.9 98.9L250.6 100.1L243.2 109.1L238.8 118.7L235.8 128.0L232.9 126.5L228.5 125.0L225.5 115.4L222.6 106.6L221.1 96.9L224.0 92.6L218.9 85.9L216.7 73.5L213.0 63.3L201.9 62.1L194.6 55.8Z" fill="#f7f8f7"/>
<path d="M-479.1 109.9L-474.6 98.9L-462.1 86.9L-452.5 90.9L-439.3 94.4L-430.4 95.6L-420.1 92.6L-403.9 97.7L-390.6 101.7L-375.9 102.8L-370.0 96.9L-362.6 97.7L-356.7 94.8L-352.3 105.5L-358.2 110.9L-361.1 115.4L-368.5 121.9L-370.7 130.9L-367.0 136.5L-356.7 141.2L-352.3 146.7L-347.9 150.4L-347.9 143.0L-344.9 139.1L-345.7 129.4L-346.4 121.0L-339.0 121.9L-334.6 126.5L-333.9 132.3L-327.2 127.1L-322.1 139.1L-315.4 148.0L-319.9 153.4L-328.7 153.8L-335.3 160.5L-327.2 157.2L-326.5 162.7L-321.3 163.7L-328.7 166.2L-334.6 167.9L-334.6 171.5L-340.5 173.8L-342.7 177.6L-343.4 180.4L-342.7 183.7L-346.4 186.2L-350.8 190.2L-349.6 197.8L-350.1 200.8L-353.0 197.0L-355.2 192.8L-361.1 192.3L-364.1 194.2L-370.0 193.5L-374.7 196.7L-375.1 202.7L-375.1 206.7L-372.9 210.4L-370.7 211.9L-365.6 211.0L-364.8 207.5L-359.7 206.7L-361.1 211.4L-361.9 215.3L-355.2 215.6L-354.5 222.9L-351.6 225.9L-347.9 225.1L-345.4 226.6L-345.7 228.1L-349.3 228.1L-353.8 226.9L-357.9 223.6L-360.4 219.9L-366.3 218.4L-370.7 215.3L-373.7 215.8L-378.8 213.8L-386.9 209.1L-386.9 205.1L-390.6 201.1L-395.0 196.5L-398.0 191.4L-400.6 189.7L-398.7 194.5L-396.5 198.7L-393.6 202.7L-392.8 204.2L-396.5 201.4L-399.8 196.5L-402.1 192.8L-404.0 188.5L-406.1 185.9L-409.2 184.8L-411.3 180.8L-412.0 178.9L-413.9 175.2L-414.5 170.9L-414.2 162.2L-415.2 157.5L-412.7 156.1L-415.7 153.8L-420.1 151.5L-423.8 143.0L-427.5 136.5L-432.6 132.3L-437.8 128.6L-443.7 128.0L-448.8 126.5L-454.7 130.3L-458.4 135.1L-464.3 137.8L-470.2 141.7L-473.9 143.0L-467.3 132.3L-470.2 128.6L-474.3 125.6L-475.4 120.3L-473.9 118.1L-468.7 113.7L-473.2 113.4Z" fill="#efefed"/>
<path d="M-345.4 226.6L-342.7 223.6L-337.6 221.4L-336.8 223.6L-331.7 223.6L-325.8 223.5L-321.3 224.4L-316.9 229.2L-311.0 230.8L-307.3 233.0L-305.1 237.0L-302.9 240.7L-297.0 242.9L-288.9 244.4L-283.0 247.3L-283.0 252.5L-286.7 257.8L-288.9 265.4L-291.1 270.9L-293.3 274.0L-299.2 275.7L-302.9 278.9L-303.1 283.1L-308.1 289.0L-310.3 292.5L-311.8 293.8L-316.9 293.4L-315.4 296.7L-316.2 300.2L-322.8 301.7L-323.5 305.6L-327.2 307.5L-325.8 309.5L-328.0 313.6L-330.9 316.4L-328.7 320.1L-332.4 325.7L-332.4 330.0L-329.4 336.7L-334.6 338.0L-339.0 331.7L-342.0 324.6L-342.7 315.7L-339.8 307.5L-339.8 298.0L-336.8 289.0L-336.8 282.2L-335.3 274.0L-335.0 266.8L-342.0 262.3L-344.9 257.0L-348.6 250.3L-351.1 247.3L-350.1 243.6L-350.1 239.9L-349.3 237.7L-347.6 236.5L-345.7 233.3L-345.7 228.4Z" fill="#efefed"/>
<path d="M-240.3 182.6L-246.2 191.1L-250.6 197.0L-256.5 207.5L-257.2 217.3L-255.7 221.4L-251.3 225.9L-247.6 228.9L-242.5 232.7L-234.4 232.1L-228.5 229.9L-224.1 230.6L-221.1 232.7L-217.4 233.6L-217.0 236.3L-218.2 240.7L-214.5 244.4L-213.3 248.1L-211.5 254.0L-213.7 264.6L-210.1 273.3L-209.3 279.7L-206.4 283.9L-204.3 292.5L-201.9 294.0L-193.8 292.5L-190.2 290.8L-184.3 283.9L-183.1 278.9L-179.1 275.7L-179.1 272.5L-180.1 269.0L-176.9 265.4L-171.7 261.6L-171.7 254.8L-173.5 251.0L-173.9 246.6L-172.2 242.9L-169.5 240.7L-164.4 236.3L-160.7 232.6L-157.7 227.4L-155.8 221.7L-160.7 222.4L-166.6 223.6L-167.7 222.1L-168.8 219.9L-173.2 216.1L-174.7 212.2L-176.6 207.5L-178.4 202.7L-181.3 197.0L-183.5 192.8L-187.2 190.6L-194.6 189.7L-201.9 188.8L-203.4 192.3L-209.0 188.8L-215.2 187.3L-216.4 180.8L-219.6 180.4L-227.0 180.8L-234.4 183.9Z" fill="#efefed"/>
<path d="M-239.7 182.3L-244.7 180.4L-245.4 176.7L-244.4 170.9L-245.1 168.7L-243.2 167.4L-234.1 168.1L-233.2 162.7L-234.7 160.1L-238.5 158.8L-233.6 156.8L-231.4 155.2L-229.2 153.2L-226.3 150.6L-224.1 146.3L-218.9 145.3L-218.9 140.4L-219.3 136.5L-215.9 134.5L-215.5 143.5L-210.8 144.3L-203.4 143.3L-199.7 136.5L-196.8 130.0L-189.4 128.9L-196.0 127.1L-198.3 125.0L-199.7 118.7L-194.6 112.0L-193.8 109.1L-199.0 109.1L-204.9 120.3L-206.1 126.5L-203.4 129.4L-207.1 136.5L-210.1 138.6L-212.6 139.4L-214.5 132.3L-215.9 130.3L-219.6 133.4L-223.2 131.5L-224.1 122.8L-219.6 117.1L-213.0 108.4L-209.3 98.9L-204.9 92.6L-197.5 89.1L-193.1 87.8L-187.2 90.5L-182.8 95.6L-177.6 96.9L-171.0 102.0L-170.3 107.7L-173.9 113.7L-166.6 108.4L-166.6 98.9L-162.1 100.9L-152.6 98.9L-145.9 97.7L-143.0 93.9L-137.1 95.6L-130.5 98.9L-128.2 78.7L-124.6 79.7L-124.6 98.9L-122.3 98.9L-118.7 83.6L-112.8 76.1L-103.2 73.5L-91.4 62.1L-78.1 51.1L-64.9 75.1L-57.5 77.2L-42.8 81.2L-39.8 88.2L-25.1 82.1L-10.3 85.9L4.4 92.6L19.2 93.5L33.9 97.7L45.7 104.7L49.1 108.8L44.2 113.7L36.8 110.9L32.4 120.3L25.1 122.5L19.2 128.0L9.6 139.1L5.9 149.2L-0.6 151.5L-1.5 136.5L4.4 125.0L-3.0 130.0L-7.4 130.9L-20.6 130.0L-28.7 144.3L-24.3 149.2L-25.1 158.3L-32.4 167.9L-38.3 169.9L-40.5 180.4L-44.2 185.0L-45.3 179.5L-47.9 174.8L-52.3 176.7L-50.9 180.4L-53.8 182.3L-51.9 191.1L-54.5 198.7L-59.7 204.4L-68.5 207.5L-72.2 206.7L-75.2 210.7L-70.8 218.4L-70.8 222.1L-76.7 226.3L-79.6 223.6L-83.3 219.1L-85.2 224.4L-83.3 228.9L-78.9 233.3L-77.8 237.3L-82.5 235.1L-86.2 227.4L-86.2 219.9L-87.7 214.5L-92.1 213.8L-92.9 209.4L-95.5 207.5L-98.0 205.1L-101.7 206.3L-103.5 208.3L-106.1 210.2L-113.1 216.1L-113.2 219.9L-113.8 223.9L-117.2 227.4L-119.4 224.4L-121.6 218.4L-123.8 210.7L-124.4 206.7L-128.2 205.1L-130.5 203.5L-133.4 200.5L-140.0 200.8L-146.7 200.3L-148.1 197.8L-151.1 198.7L-155.5 196.5L-157.7 192.8L-160.7 192.8L-157.7 198.7L-157.0 201.1L-155.4 202.4L-151.8 202.4L-148.4 199.5L-148.1 201.9L-143.3 205.1L-146.2 210.7L-150.4 213.3L-154.8 215.3L-159.9 218.4L-165.1 220.2L-167.6 220.2L-168.3 216.8L-172.5 209.1L-174.7 204.4L-179.5 196.2L-181.0 196.5L-183.4 192.8L-180.6 190.2L-179.8 188.0L-178.4 183.2L-178.1 181.0L-183.5 181.9L-190.2 180.8L-192.4 177.6L-192.4 173.8L-188.7 172.4L-181.3 170.9L-175.4 172.8L-170.3 171.9L-172.5 168.1L-176.1 164.8L-173.9 160.5L-179.8 164.1L-182.8 162.7L-185.7 161.6L-187.6 164.8L-189.4 167.9L-190.2 171.3L-193.1 173.6L-197.5 173.8L-196.0 178.6L-198.3 181.3L-200.5 177.6L-202.7 173.8L-202.7 170.9L-207.8 167.9L-211.1 163.7L-213.3 164.1L-213.0 166.8L-210.8 169.9L-207.8 171.9L-204.2 174.4L-206.4 176.7L-207.8 178.6L-208.3 174.8L-210.8 172.8L-215.2 169.9L-216.7 166.8L-218.9 166.0L-222.6 168.7L-227.0 168.3L-226.7 171.1L-230.2 172.8L-231.9 175.7L-231.1 177.3L-234.4 181.0Z" fill="#efefed"/>
<path d="M-158.8 257.0L-157.0 262.3L-158.5 266.2L-161.4 277.3L-165.1 278.1L-167.3 272.5L-166.6 264.6L-162.9 262.3Z" fill="#efefed"/>
<path d="M-349.3 76.1L-339.0 84.5L-331.7 90.5L-328.7 100.9L-322.8 106.6L-326.5 117.1L-332.4 121.3L-337.6 117.4L-343.4 114.4L-346.4 112.0L-339.8 106.6L-340.5 100.9L-349.3 93.9L-355.2 92.6L-361.9 90.5L-364.1 81.2L-356.7 74.6Z" fill="#efefed"/>
<path d="M-405.4 78.7L-393.6 78.7L-385.5 88.2L-381.8 96.9L-390.6 97.7L-400.9 95.6L-405.4 90.5Z" fill="#efefed"/>
<path d="M-414.2 85.9L-415.7 73.5L-408.3 72.4L-403.1 79.7L-406.8 87.3Z" fill="#efefed"/>
<path d="M-364.1 59.0L-349.3 60.9L-342.0 41.6L-334.6 29.1L-322.8 14.5L-334.6 3.2L-356.7 9.1L-368.5 24.5Z" fill="#efefed"/>
<path d="M-367.0 70.2L-349.3 70.8L-350.1 60.9L-364.1 59.6L-372.9 62.1Z" fill="#efefed"/>
<path d="M-358.2 108.4L-350.8 114.7L-358.2 116.7L-361.1 113.7Z" fill="#efefed"/>
<path d="M-380.3 76.1L-370.0 73.5L-364.1 78.7L-370.0 83.6L-376.6 85.9Z" fill="#efefed"/>
<path d="M-403.9 59.0L-386.2 62.1L-375.9 65.1L-384.7 70.8L-400.9 70.2Z" fill="#efefed"/>
<path d="M-372.9 30.9L-358.2 35.1L-361.1 50.4L-371.5 49.0Z" fill="#efefed"/>
<path d="M-318.8 159.2L-313.2 150.1L-309.1 159.2L-313.5 161.0Z" fill="#efefed"/>
<path d="M-356.7 206.1L-351.6 204.0L-344.9 205.9L-340.8 208.8L-345.7 209.3L-350.1 206.3Z" fill="#efefed"/>
<path d="M-341.2 211.4L-337.6 209.3L-332.2 211.3L-336.8 212.8Z" fill="#efefed"/>
<path d="M-264.6 115.4L-266.8 110.2L-263.9 107.0L-255.7 106.6L-252.1 110.9L-253.5 114.4L-258.7 117.4Z" fill="#efefed"/>
<path d="M-239.8 153.6L-229.4 151.1L-228.9 147.5L-231.1 145.5L-233.8 140.2L-234.4 134.5L-236.0 132.0L-238.8 132.0L-240.6 137.8L-238.8 141.7L-235.8 142.0L-236.1 145.8L-238.4 147.2L-239.1 149.9L-236.1 150.6Z" fill="#efefed"/>
<path d="M-240.3 148.7L-240.6 143.0L-242.5 141.0L-246.2 143.8L-246.6 149.6Z" fill="#efefed"/>
<path d="M-215.9 37.6L-207.8 33.5L-191.6 31.7L-199.0 52.4L-207.1 59.0L-213.7 45.3Z" fill="#efefed"/>
<path d="M-155.5 85.9L-148.9 76.1L-143.0 62.1L-129.7 57.1L-143.0 73.5L-148.9 88.2L-153.3 89.1Z" fill="#efefed"/>
<path d="M-94.3 41.6L-84.0 26.4L-76.7 37.6L-85.5 49.0Z" fill="#efefed"/>
<path d="M-113.8 224.7L-110.8 228.1L-111.7 230.0L-113.5 230.0Z" fill="#efefed"/>
<path d="M-91.0 230.9L-87.0 233.3L-77.4 242.4L-75.2 247.8L-81.1 245.1L-89.2 235.5Z" fill="#efefed"/>
<path d="M-76.4 249.2L-62.7 250.6L-62.8 252.1L-75.2 250.6Z" fill="#efefed"/>
<path d="M-70.8 237.0L-58.2 228.9L-56.0 231.8L-57.5 237.7L-60.4 245.1L-68.5 243.6L-70.8 239.9Z" fill="#efefed"/>
<path d="M-218.2 172.4L-217.3 172.8L-217.0 176.7L-218.9 176.7L-219.3 173.2Z" fill="#efefed"/>
<path d="M-213.0 178.4L-208.4 178.0L-209.2 181.0L-213.1 179.3Z" fill="#efefed"/>
<path d="M-196.8 183.5L-192.7 183.7L-196.0 184.2Z" fill="#efefed"/>
<path d="M-183.8 184.1L-180.6 183.0L-182.0 184.8Z" fill="#efefed"/>
<path d="M-145.9 24.5L-137.1 24.5L-140.0 33.5L-157.7 33.5L-162.1 29.1Z" fill="#efefed"/>
<path d="M-69.0 209.1L-67.8 209.7L-70.0 211.9L-71.3 210.4Z" fill="#efefed"/>
<path d="M-338.3 45.3L-328.7 30.9L-319.9 16.6L-305.1 11.3L-290.4 -3.0L-275.6 -4.4L-260.9 9.1L-249.1 19.7L-258.0 37.6L-259.4 59.0L-263.9 78.7L-266.8 85.9L-263.9 92.6L-269.7 98.9L-280.1 100.1L-287.4 109.1L-291.9 118.7L-294.8 128.0L-297.8 126.5L-302.2 125.0L-305.1 115.4L-308.1 106.6L-309.5 96.9L-306.6 92.6L-311.8 85.9L-314.0 73.5L-317.7 63.3L-328.7 62.1L-336.1 55.8Z" fill="#f7f8f7"/>
<path d="M23.1 293.3L31.7 299.3L29.5 302.7L26.5 306.5L24.3 302.7L25.8 297.1Z" fill="#efefed"/>
<path d="M23.3 304.6L25.5 306.9L20.6 312.6L17.7 317.0L14.0 315.7L16.2 311.6L21.4 306.5Z" fill="#efefed"/>
<path d="M33.2 85.9L38.3 85.5L36.8 89.1L31.7 88.2Z" fill="#efefed"/>
<path d="M163.6 161.2L174.7 161.6L173.9 158.3L168.0 157.2Z" fill="#aac7f0"/>
<path d="M169.8 171.5L171.0 162.7L173.9 163.1L171.7 170.9Z" fill="#aac7f0"/>
<path d="M175.4 162.7L181.3 165.8L177.6 168.9L175.4 164.8Z" fill="#aac7f0"/>
<path d="M176.1 171.5L182.8 169.3L179.8 170.3Z" fill="#aac7f0"/>
<path d="M368.5 165.8L372.9 161.6L377.3 164.8L376.6 170.9L378.8 174.8L377.3 180.4L372.9 180.1L371.4 174.8L372.2 172.8L369.2 168.9Z" fill="#aac7f0"/>
<path d="M153.3 144.3L157.0 144.8L156.2 152.7L154.0 150.4Z" fill="#aac7f0"/>
<path d="M215.2 360.7L211.5 363.7L207.1 369.3L204.1 375.6L201.2 383.6L199.0 392.5L196.0 399.7L187.2 404.9L166.6 399.7L151.8 407.6L33.9 444.9L33.9 503.6L490.8 503.6L476.1 444.9L473.1 372.2L446.6 370.0L428.9 371.8L420.1 373.7L409.8 382.4L402.4 381.5L399.4 375.6L380.3 370.0L365.5 375.6L350.8 381.5L336.1 385.8L321.3 385.8L306.6 387.1L291.8 390.2L281.5 396.3L269.7 404.9L257.9 416.3L247.6 429.4L225.5 422.6L210.8 410.4L209.3 399.7L208.6 385.8L209.3 375.6L211.5 368.2L214.0 363.0Z" fill="#f7f8f7"/>
<path d="M466.5 272.5L467.3 279.7L466.5 282.2L468.7 287.3L468.7 293.1L473.1 294.3L480.5 292.2L489.4 288.3L498.2 294.3L502.6 295.2L505.6 299.8L514.4 301.7L520.3 298.9L525.5 282.2L524.7 277.3L514.4 267.7L509.3 255.1L507.8 264.6L499.7 257.0L492.3 256.3L489.4 261.3L483.5 260.8L479.0 266.2L471.7 270.4Z" fill="#efefed"/>
<path d="M-25.1 371.8L-10.3 379.5L4.4 383.6L13.3 387.1L20.6 391.1L24.3 399.7L22.1 429.4L-25.1 444.9Z" fill="#f7f8f7"/>
<text x="56.4" y="29.5" font-family="Liberation Sans" font-size="11" fill="#4d6299" font-weight="normal" text-anchor="middle" letter-spacing="0.8">Arctic</text>
<text x="56.4" y="41.7" font-family="Liberation Sans" font-size="11" fill="#4d6299" font-weight="normal" text-anchor="middle" letter-spacing="0.8">Ocean</text>
<text x="56.4" y="186.2" font-family="Liberation Sans" font-size="11" fill="#4d6299" font-weight="normal" text-anchor="middle" letter-spacing="0.8">Pacific</text>
<text x="56.4" y="199.0" font-family="Liberation Sans" font-size="11" fill="#4d6299" font-weight="normal" text-anchor="middle" letter-spacing="0.8">Ocean</text>
<text x="237.7" y="188.5" font-family="Liberation Sans" font-size="11" fill="#4d6299" font-weight="normal" text-anchor="middle" letter-spacing="0.8">Atlantic</text>
<text x="237.7" y="200.8" font-family="Liberation Sans" font-size="11" fill="#4d6299" font-weight="normal" text-anchor="middle" letter-spacing="0.8">Ocean</text>
<text x="415.5" y="267.0" font-family="Liberation Sans" font-size="11" fill="#4d6299" font-weight="normal" text-anchor="middle" letter-spacing="0.8">Indian</text>
<text x="415.5" y="279.5" font-family="Liberation Sans" font-size="11" fill="#4d6299" font-weight="normal" text-anchor="middle" letter-spacing="0.8">Ocean</text>
<text x="118.0" y="359.8" font-family="Liberation Sans" font-size="11" fill="#4d6299" font-weight="normal" text-anchor="middle" letter-spacing="0.9">Southern Ocean</text>
<text x="152.0" y="148.0" font-family="Liberation Sans" font-size="11.5" fill="#1f1f1f" font-weight="bold" text-anchor="middle" letter-spacing="0" textLength="99.8" lengthAdjust="spacingAndGlyphs">NORTH AMERICA</text>
<text x="334.2" y="153.8" font-family="Liberation Sans" font-size="11.5" fill="#1f1f1f" font-weight="bold" text-anchor="middle" letter-spacing="0" textLength="44.6" lengthAdjust="spacingAndGlyphs">EUROPE</text>
<text x="451.5" y="144.0" font-family="Liberation Sans" font-size="11.5" fill="#1f1f1f" font-weight="bold" text-anchor="middle" letter-spacing="0" textLength="27" lengthAdjust="spacingAndGlyphs">ASIA</text>
<text x="336.1" y="232.8" font-family="Liberation Sans" font-size="11.5" fill="#1f1f1f" font-weight="bold" text-anchor="middle" letter-spacing="0" textLength="41.4" lengthAdjust="spacingAndGlyphs">AFRICA</text>
<text x="224.0" y="266.0" font-family="Liberation Sans" font-size="11.5" fill="#1f1f1f" font-weight="bold" text-anchor="middle" letter-spacing="0" textLength="97.2" lengthAdjust="spacingAndGlyphs">SOUTH AMERICA</text>
<text x="4.5" y="274.0" font-family="Liberation Sans" font-size="11.5" fill="#1f1f1f" font-weight="bold" text-anchor="middle" letter-spacing="0">A</text>
<text x="385.0" y="405.8" font-family="Liberation Sans" font-size="11.5" fill="#1f1f1f" font-weight="bold" text-anchor="middle" letter-spacing="0" textLength="74" lengthAdjust="spacingAndGlyphs">ANTARCTICA</text>
<circle cx="157.6" cy="119.8" r="10.4" fill="#b884c0" stroke="#6b007b" stroke-width="1.2"/>
<circle cx="154.3" cy="175.2" r="13.2" fill="#b884c0" stroke="#6b007b" stroke-width="1.2"/>
<circle cx="149.0" cy="202.5" r="9.1" fill="#b884c0" stroke="#6b007b" stroke-width="1.2"/>
<circle cx="303.1" cy="160.9" r="6.4" fill="#b884c0" stroke="#6b007b" stroke-width="1.2"/>
<circle cx="314.9" cy="151.0" r="3.7" fill="#b884c0" stroke="#6b007b" stroke-width="1.2"/>
<path d="M5.5 375 L8.5 376 L8.5 384 L14.5 381.5 L12 380 L10.5 379" fill="none" stroke="#111" stroke-width="0"/>
<g transform="translate(5 373.5)"><path d="M0 0 L3.2 1 V11 L9 7.8 L6.3 6.6 L4.8 3.3 L11.8 5.8 V9.5 L3.2 14.8 L0 12.6 Z" fill="#111"/></g>
<text x="20.5" y="387.5" font-family="Liberation Sans" font-size="14" fill="#111">Bing</text>
<text x="142.79999999999995" y="392.5" font-family="Liberation Sans" font-size="9" fill="#222" textLength="305" lengthAdjust="spacingAndGlyphs">© 2021 TomTom, © 2021 Microsoft Corporation, © OpenStreetMap  Terms</text>
</svg>

</div>
<!-- handles -->
<svg class="a" style="left:920px;top:300px" width="494" height="442" viewBox="0 0 494 442">
 <g fill="none" stroke="#8a8886" stroke-width="3.5">
  <path d="M5.5 18 V5.5 H17"/><path d="M477 5.5 H488.5 V18"/>
  <path d="M5.5 424 V436.5 H17"/><path d="M477 436.5 H488.5 V424"/>
  <path d="M240 5.5 H254"/><path d="M240 436.5 H254"/>
  <path d="M5.5 214 V228"/><path d="M488.5 214 V228"/>
 </g>
</svg>

<!-- page tabs -->
<div class="a" style="left:61px;top:912px;width:1417px;height:44px;background:#f3f2f1"></div>
<svg class="a" style="left:62px;top:925px" width="45" height="18" viewBox="0 0 45 18"><path d="M11 3.5 L5.5 9 L11 14.5 Z" fill="#c8c6c4"/><path d="M33 3.5 L38.5 9 L33 14.5 Z" fill="#a19f9d"/></svg>
<div class="a" style="left:109.5px;top:912px;width:95px;height:44px;background:#fff;border-left:1px solid #c8c6c4;border-right:1px solid #c8c6c4"></div>
<div class="a" style="left:110px;top:951px;width:95px;height:5px;background:#f2c811"></div>
<div class="a" style="left:135.5px;top:925px;font-size:14.6px;line-height:18px;color:#252423">Page 1</div>
<div class="a" style="left:300px;top:912px;width:1px;height:44px;background:#c8c6c4"></div>
<div class="a" style="left:230px;top:925px;font-size:14.6px;line-height:18px;color:#252423">Page 2</div>
<div class="a" style="left:301px;top:914px;width:48px;height:40px;background:#f2c811"></div>
<svg class="a" style="left:316px;top:925px" width="18" height="18" viewBox="0 0 18 18"><path d="M9 2 V16 M2 9 H16" stroke="#605e5c" stroke-width="3.2"/></svg>

<!-- filters pane -->
<div class="a" style="left:1435px;top:158px;width:2px;height:754px;background:#8a8593"></div>
<div class="a" style="left:1437px;top:158px;width:41px;height:754px;background:#fff"></div>
<svg class="a" style="left:1450px;top:177px" width="14" height="20" viewBox="0 0 14 20"><path d="M11 3 L3.5 10 L11 17" fill="none" stroke="#252423" stroke-width="1.3"/></svg>
<svg class="a" style="left:1451px;top:236px" width="18" height="19" viewBox="0 0 18 19"><path d="M14.4 2.4 V16.4 L7.7 10.6 H2.6 V8.3 H7.7 Z" fill="none" stroke="#3b3a39" stroke-width="1.1" stroke-linejoin="round"/></svg>
<div class="a" style="left:1467.5px;top:268.5px;transform-origin:0 0;transform:rotate(90deg);font-size:19.5px;line-height:20px;color:#252423;letter-spacing:0.4px">Filters</div>

<!-- viz pane -->
<div class="a" style="left:1477px;top:158px;width:1px;height:798px;background:#e1dfdd"></div>
<div class="a" style="left:1493px;top:178.5px;font-size:19.2px;line-height:22px;font-weight:bold;color:#252423;transform:scaleX(0.975);transform-origin:0 0">Visualizations</div>
<svg class="a" style="left:1676px;top:177px" width="14" height="20" viewBox="0 0 14 20"><path d="M4 3 L11.5 10 L4 17" fill="none" stroke="#252423" stroke-width="1.3"/></svg>
<svg class="a" style="left:1478px;top:218px" width="225" height="180" viewBox="0 0 225 180">
<rect x="4.2" y="92.2" width="26.8" height="26.4" fill="#c8c6c4" stroke="#8a8886" stroke-width="1.5"/>
<g transform="translate(7 5)"><path d="M0.8 0 V20.2 H20" fill="none" stroke="#3b3a39" stroke-width="1.5"/><rect x="1.5" y="2" width="5" height="5" fill="#fafafa" stroke="#3b3a39" stroke-width="1"/><rect x="6.5" y="2" width="6.5" height="5" fill="#6cb4ee" stroke="#1e3fc0" stroke-width="1"/><rect x="1.5" y="11" width="7" height="5" fill="#fafafa" stroke="#3b3a39" stroke-width="1"/><rect x="8.5" y="11" width="10" height="5" fill="#bdbbb9" stroke="#8a8886" stroke-width="1"/></g>
<g transform="translate(42 5)"><path d="M0.8 0 V20.2 H20" fill="none" stroke="#3b3a39" stroke-width="1.5"/><rect x="3" y="6" width="5" height="6" fill="#6cb4ee" stroke="#1e3fc0" stroke-width="1"/><rect x="3" y="12" width="5" height="8" fill="#fafafa" stroke="#3b3a39" stroke-width="1"/><rect x="12.5" y="2" width="5" height="8" fill="#bdbbb9" stroke="#8a8886" stroke-width="1"/><rect x="12.5" y="10" width="5" height="10" fill="#fafafa" stroke="#3b3a39" stroke-width="1"/></g>
<g transform="translate(77 5)"><path d="M0.8 0 V20.2 H20" fill="none" stroke="#3b3a39" stroke-width="1.2"/><rect x="1.2" y="1" width="18" height="4.5" fill="#6cb4ee" stroke="#1e3fc0" stroke-width="1.2"/><rect x="1.2" y="6" width="10" height="3.5" fill="#bdbbb9" stroke="#8a8886" stroke-width="1"/><rect x="1.2" y="10" width="9" height="3" fill="#bdbbb9" stroke="#8a8886" stroke-width="1"/><rect x="1.2" y="13.5" width="14" height="4" fill="#fafafa" stroke="#3b3a39" stroke-width="1"/></g>
<g transform="translate(112 5)"><path d="M0.8 0 V20.2 H20" fill="none" stroke="#3b3a39" stroke-width="1.5"/><rect x="2.5" y="1.5" width="4" height="18.5" fill="#6cb4ee" stroke="#1e3fc0" stroke-width="1.2"/><rect x="6.5" y="8" width="3.5" height="12" fill="#fafafa" stroke="#3b3a39" stroke-width="1"/><rect x="10" y="11" width="3" height="9" fill="#bdbbb9" stroke="#8a8886" stroke-width="1"/><rect x="14.5" y="5.5" width="4" height="14.5" fill="#fafafa" stroke="#3b3a39" stroke-width="1"/></g>
<g transform="translate(147 5)"><path d="M0.8 0 V20.2 H20" fill="none" stroke="#3b3a39" stroke-width="1.5"/><rect x="1.5" y="2" width="4" height="5" fill="#fafafa" stroke="#3b3a39" stroke-width="1"/><rect x="5.5" y="2" width="12.5" height="5" fill="#6cb4ee" stroke="#1e3fc0" stroke-width="1.2"/><rect x="1.5" y="11" width="11" height="5" fill="#fafafa" stroke="#3b3a39" stroke-width="1"/><rect x="12.5" y="11" width="5.5" height="5" fill="#bdbbb9" stroke="#8a8886" stroke-width="1"/><path d="M1.5 17.5 H18" stroke="#3b3a39" stroke-width="1"/></g>
<g transform="translate(182 5)"><path d="M0.8 0 V20.2 H20" fill="none" stroke="#3b3a39" stroke-width="1.5"/><rect x="3" y="2" width="5" height="12" fill="#6cb4ee" stroke="#1e3fc0" stroke-width="1.2"/><rect x="3" y="14" width="5" height="6" fill="#fafafa" stroke="#3b3a39" stroke-width="1"/><rect x="12.5" y="2" width="5" height="4.5" fill="#bdbbb9" stroke="#8a8886" stroke-width="1"/><rect x="12.5" y="6.5" width="5" height="13.5" fill="#fafafa" stroke="#3b3a39" stroke-width="1"/></g>
<g transform="translate(7 35)"><path d="M0.8 0 V20.2 H20" fill="none" stroke="#3b3a39" stroke-width="1.5"/><path d="M1 9.5 L7 5 L13 10 L19 4.5" fill="none" stroke="#3b3a39" stroke-width="1.3"/><path d="M1 16 L12 3 L20 10.5" fill="none" stroke="#1e3fc0" stroke-width="1.3"/></g>
<g transform="translate(42 35)"><path d="M0.5 20 V12 L7 1 L13 10 L16 0 L20 7.5 V20 Z" fill="#bdbbb9" stroke="none"/><path d="M0.5 12 L7 1 L13 10 L9 15 Z" fill="#fafafa" stroke="#3b3a39" stroke-width="1.2"/><path d="M0.5 20 V12 L6 16 L13 8 L19.5 20 Z" fill="#6cb4ee" stroke="#1e3fc0" stroke-width="1.2"/><path d="M0.8 0 V20.2 H20" fill="none" stroke="#3b3a39" stroke-width="1"/></g>
<g transform="translate(77 35)"><path d="M0.5 20.2 H20 M0.8 0 V20.2" fill="none" stroke="#3b3a39" stroke-width="1.3"/><path d="M1 6 L6 12 L13 3 L19.5 7 V14 L13 10 L6 18 L1 13 Z" fill="#6cb4ee" stroke="#1e3fc0" stroke-width="1.3"/><path d="M1 13 L6 18 L13 10 L19.5 14 V20 H1 Z" fill="#fafafa"/></g>
<g transform="translate(112 35)"><path d="M0.8 0 V20.2 H20" fill="none" stroke="#3b3a39" stroke-width="1.5"/><rect x="3" y="2.5" width="4" height="11" fill="#6cb4ee" stroke="#1e3fc0" stroke-width="1.2"/><rect x="3" y="13.5" width="4" height="6.5" fill="#fafafa" stroke="#3b3a39" stroke-width="1"/><rect x="12.5" y="2.5" width="4" height="5" fill="#bdbbb9" stroke="#8a8886" stroke-width="1"/><rect x="12.5" y="7.5" width="4" height="12.5" fill="#fafafa" stroke="#3b3a39" stroke-width="1"/><path d="M1 19 L7 11 L12 15 L20 6" fill="none" stroke="#3b3a39" stroke-width="1.2"/></g>
<g transform="translate(147 35)"><path d="M0.8 0 V20.2 H20" fill="none" stroke="#3b3a39" stroke-width="1.5"/><rect x="3" y="8" width="4" height="12" fill="#6cb4ee" stroke="#1e3fc0" stroke-width="1.2"/><rect x="8" y="1" width="4" height="19" fill="#fafafa" stroke="#3b3a39" stroke-width="1"/><rect x="13" y="5" width="4" height="15" fill="#bdbbb9" stroke="#8a8886" stroke-width="1"/><path d="M1 19 L7 11 L12 15 L20 6" fill="none" stroke="#3b3a39" stroke-width="1.2"/></g>
<g transform="translate(182 35)"><path d="M0.8 0 V20.2 H20" fill="none" stroke="#3b3a39" stroke-width="1.5"/><path d="M2 2 Q10 9 19 2 V6 Q10 13 2 6 Z" fill="#bdbbb9" stroke="#8a8886" stroke-width="1"/><rect x="2" y="12" width="17" height="4" fill="#e88a2a"/><path d="M2 8 Q10 19 19 8" fill="none" stroke="#1e3fc0" stroke-width="3"/><path d="M2 8 Q10 19 19 8" fill="none" stroke="#6cb4ee" stroke-width="1.2"/></g>
<g transform="translate(7 65)"><path d="M0.8 0 V20.2 H20" fill="none" stroke="#3b3a39" stroke-width="1.5"/><rect x="2" y="6" width="4" height="14" fill="#fafafa" stroke="#3b3a39" stroke-width="1"/><rect x="6" y="6" width="3" height="5" fill="#bdbbb9" stroke="#8a8886" stroke-width="1"/><rect x="9" y="1" width="3" height="10" fill="#6cb4ee" stroke="#1e3fc0" stroke-width="1.2"/><rect x="13" y="1" width="4.5" height="19" fill="#fafafa" stroke="#3b3a39" stroke-width="1"/></g>
<g transform="translate(42 65)"><rect x="0.5" y="1" width="20" height="5" fill="#6cb4ee" stroke="#1e3fc0" stroke-width="1.3"/><rect x="2.5" y="6" width="16" height="5.5" fill="#6cb4ee" stroke="#1e3fc0" stroke-width="1.3"/><rect x="6.5" y="11.5" width="8" height="6.5" fill="#6cb4ee" stroke="#1e3fc0" stroke-width="1.3"/></g>
<g transform="translate(77 65)"><path d="M0.8 0 V20.2 H20" fill="none" stroke="#3b3a39" stroke-width="1.5"/><rect x="14.5" y="1.5" width="3" height="3" fill="#3b3a39"/><rect x="3.5" y="4.5" width="3" height="3" fill="#6cb4ee"/><rect x="9" y="8.5" width="3" height="3" fill="#6cb4ee" stroke="#1e3fc0" stroke-width="0.5"/><rect x="15" y="12.5" width="3" height="3" fill="#6cb4ee"/><rect x="3" y="14" width="3" height="3" fill="#3b3a39"/></g>
<g transform="translate(112 65)"><circle cx="10.5" cy="10.5" r="9.5" fill="#fafafa" stroke="#3b3a39" stroke-width="1.3"/><path d="M10.5 10.5 V1 A9.5 9.5 0 0 1 17.6 16.8 Z" fill="#6cb4ee" stroke="#1e3fc0" stroke-width="1.2"/></g>
<g transform="translate(147 65)"><circle cx="10.5" cy="10.5" r="7.5" fill="none" stroke="#6cb4ee" stroke-width="5"/><path d="M10.5 1 A9.5 9.5 0 1 1 1 11.5" fill="none" stroke="#1e3fc0" stroke-width="1.2"/><circle cx="10.5" cy="10.5" r="5" fill="#fafafa" stroke="#1e3fc0" stroke-width="1.2"/><path d="M10.5 1 V5.5 M1 11.5 L5.5 11" stroke="#1e3fc0" stroke-width="1"/></g>
<g transform="translate(182 65)"><rect x="0.5" y="0.5" width="20" height="20" fill="#fafafa" stroke="#3b3a39" stroke-width="1.2"/><rect x="0.5" y="0.5" width="10" height="20" fill="#6cb4ee" stroke="#1e3fc0" stroke-width="1.2"/><path d="M0.5 10 H10.5 M10.5 6.5 H20.5 M10.5 13.5 H20.5 M15 6.5 V20.5" stroke="#3b3a39" stroke-width="1.1"/><path d="M0.5 10 H10.5" stroke="#1e3fc0" stroke-width="1.2"/></g>
<g transform="translate(7 94.5)"><circle cx="10" cy="9" r="6.5" fill="#3b3a39"/><path d="M6.5 5 Q9 6.5 8 9 Q11 10 9.5 13 M12 4 Q11.5 7 14.5 8.5" fill="none" stroke="#c8c6c4" stroke-width="1.6"/><path d="M4 4 A8.5 8.5 0 0 0 10 17.5 M10 17.5 V19.5 M5.5 20 H15" fill="none" stroke="#3b3a39" stroke-width="1.3"/></g>
<g transform="translate(42 94.5)"><path d="M1 1 L7 2.5 L11 1.5 L20 0.5 V10 L18.5 14 L14 18 L9.5 20 L6 16 L3 14 L0.5 8 Z" fill="#bdbbb9" stroke="#3b3a39" stroke-width="0.8"/><path d="M1 1 L7 2.5 L8 8 L1.5 9 Z M9.5 20 L10 13 L20 10 L18.5 14 L14 18 Z" fill="#6cb4ee" stroke="#1e3fc0" stroke-width="1"/></g>
<g transform="translate(77 94.5)"><path d="M1 19 A9.5 9.5 0 0 1 20 19 H16.5 A6 6 0 0 0 4.5 19 Z" fill="#fafafa" stroke="#3b3a39" stroke-width="1.1"/><path d="M10.5 9.5 A9.5 9.5 0 0 1 20 19 H16.5 A6 6 0 0 0 10.5 13 Z" fill="#6cb4ee" stroke="#1e3fc0" stroke-width="1.1"/><path d="M8.5 18 L13 13.5" stroke="#3b3a39" stroke-width="2"/></g>
<g transform="translate(112 94.5)"><rect x="0.5" y="1.5" width="20" height="16.5" fill="#fafafa" stroke="#3b3a39" stroke-width="1.3"/><path d="M2.5 15.5 H18.5" stroke="#8a8886" stroke-width="1"/><text x="10.5" y="12.5" font-family="Liberation Sans" font-size="8.5" fill="#1a6fd0" text-anchor="middle">123</text></g>
<g transform="translate(147 94.5)"><rect x="0.5" y="0.5" width="20" height="20" fill="#fafafa" stroke="#3b3a39" stroke-width="1.3"/><path d="M3.5 3 V18" stroke="#bdbbb9" stroke-width="1.2"/><path d="M6 6 H17.5 M6 13 H17.5" stroke="#1e3fc0" stroke-width="1.4"/><path d="M6 9 H10 M6 16 H10" stroke="#bdbbb9" stroke-width="1"/></g>
<g transform="translate(182 94.5)"><rect x="0.5" y="1.5" width="20" height="16.5" fill="#fafafa" stroke="#3b3a39" stroke-width="1.3"/><path d="M3 11 L5.5 5.5 L8 11 Z" fill="#8a8886"/><path d="M11 4.5 H17 L14 10.5 Z" fill="#f07b55"/><path d="M2.5 14.5 H18.5" stroke="#3b3a39" stroke-width="1"/></g>
<g transform="translate(7 125)"><rect x="0.5" y="0.5" width="20" height="20" fill="#fafafa" stroke="#3b3a39" stroke-width="1.3"/><rect x="0.5" y="0.5" width="20" height="3" fill="#8a8886"/><rect x="3" y="7" width="3" height="3" fill="none" stroke="#8a8886" stroke-width="1"/><rect x="3" y="13" width="3" height="3" fill="none" stroke="#8a8886" stroke-width="1"/><path d="M10 11.5 H21 L17 16 V21 H14 V16 Z" fill="#fafafa" stroke="#3b3a39" stroke-width="1.3"/></g>
<g transform="translate(42 125)"><rect x="0.5" y="0.5" width="20" height="20" fill="#fafafa" stroke="#3b3a39" stroke-width="1.3"/><rect x="0.5" y="0.5" width="20" height="3" fill="#8a8886"/><path d="M0.5 8.5 H20.5 M0.5 14 H20.5 M7 3.5 V20.5 M14 3.5 V20.5" stroke="#3b3a39" stroke-width="1.1"/></g>
<g transform="translate(77 125)"><rect x="0.5" y="0.5" width="20" height="20" fill="#fafafa" stroke="#3b3a39" stroke-width="1.3"/><rect x="0.5" y="0.5" width="20" height="3" fill="#8a8886"/><rect x="14" y="3.5" width="6.5" height="17" fill="#6cb4ee"/><rect x="0.5" y="14" width="20" height="6.5" fill="#6cb4ee"/><path d="M0.5 8.5 H20.5 M0.5 14 H20.5 M7 3.5 V20.5 M14 3.5 V20.5" stroke="#3b3a39" stroke-width="1.1"/><path d="M14 14 H20.5 V20.5 H0.5" fill="none" stroke="#1e3fc0" stroke-width="1"/></g>
<g transform="translate(112 125)"><text x="10" y="19" font-family="Liberation Sans" font-size="17" font-weight="bold" fill="#1a5fc8" text-anchor="middle">R</text></g>
<g transform="translate(147 125)"><text x="10.5" y="16" font-family="Liberation Sans" font-size="15" font-weight="bold" fill="#1a5fc8" text-anchor="middle" textLength="21" lengthAdjust="spacingAndGlyphs">Py</text></g>
<g transform="translate(182 125)"><path d="M0.8 0 V20.2 H20" fill="none" stroke="#3b3a39" stroke-width="1.5"/><path d="M1 4 H16.5" stroke="#1e3fc0" stroke-width="1.5"/><circle cx="17.5" cy="4" r="2.2" fill="#6cb4ee" stroke="#1e3fc0" stroke-width="1"/><path d="M1 9.5 H12" stroke="#8a8886" stroke-width="1.2"/><circle cx="12.5" cy="9.5" r="1.8" fill="#fafafa" stroke="#8a8886" stroke-width="1"/><path d="M1 14 H8" stroke="#8a8886" stroke-width="1.2"/><circle cx="8" cy="14" r="1.8" fill="#fafafa" stroke="#8a8886" stroke-width="1"/></g>
<g transform="translate(7 155)"><rect x="0" y="8" width="8" height="5" fill="#6cb4ee" stroke="#1e3fc0" stroke-width="1"/><rect x="13" y="1" width="7.5" height="5" fill="#6cb4ee" stroke="#1e3fc0" stroke-width="1"/><rect x="13" y="8" width="7.5" height="5" fill="#6cb4ee" stroke="#1e3fc0" stroke-width="1"/><rect x="13" y="15" width="7.5" height="5" fill="#6cb4ee" stroke="#1e3fc0" stroke-width="1"/><path d="M8 10.5 H13 M10.5 3.5 V17.5 M10.5 3.5 H13 M10.5 17.5 H13" fill="none" stroke="#3b3a39" stroke-width="1.2"/></g>
<g transform="translate(42 155)"><path d="M0.8 2 H20 V15.5 H7.5 L3.5 20 V15.5 H0.8 Z" fill="#fafafa" stroke="#1e3fc0" stroke-width="1.3"/></g>
<g transform="translate(77 155)"><path d="M5 2 H20 V20 H1 V11" fill="#fafafa" stroke="#1e3fc0" stroke-width="1.3"/><path d="M20 6 Q14 6 13 11 Q11 14 7 16 L6 20 H12 Q14 15 20 15 Z" fill="#6cb4ee"/><path d="M0.5 1.5 Q0.5 0 2 0 H5 Q6 0 6 1.5 V7 L3 11 L0.5 7 Z" fill="#d9731e"/><circle cx="3.2" cy="3.2" r="1.2" fill="#fff"/><circle cx="18.5" cy="12" r="1.8" fill="#d9731e"/><circle cx="17.5" cy="18" r="2.2" fill="#d9731e"/></g>
<g transform="translate(112 155)"><path d="M11.5 0.8 L20.5 10.5 L11.5 20.3 L0.8 10.5 L5.5 6 L11 11 L15.5 6 Z" fill="none" stroke="#3b3a39" stroke-width="1.3"/><path d="M5.5 6 L11.5 0.8 M5.5 15 L11 10.5 L15.5 15" fill="none" stroke="#3b3a39" stroke-width="1.3"/></g>
<g transform="translate(147 155)"><circle cx="3.5" cy="9.5" r="1.2" fill="#3b3a39"/><circle cx="10.5" cy="9.5" r="1.2" fill="#3b3a39"/><circle cx="17.5" cy="9.5" r="1.2" fill="#3b3a39"/></g>
</svg>
<div class="a" style="left:1478px;top:399px;width:225px;height:1px;background:#e1dfdd"></div>
<svg class="a" style="left:1500px;top:404px" width="140" height="36" viewBox="0 0 140 36">
 <path d="M5 6.4 H25" stroke="#252423" stroke-width="1.3"/>
 <g fill="none" stroke="#3b3a39" stroke-width="1.3" stroke-dasharray="2.2 1.6">
  <rect x="5.5" y="10.5" width="24" height="7.5"/><rect x="5.5" y="21.5" width="24" height="7.5"/>
 </g>
 <rect x="56.5" y="6.2" width="18" height="5.5" rx="1.5" fill="none" stroke="#3b3a39" stroke-width="1.3"/>
 <path d="M74.5 8.8 H77.5 V15 H67 V19.5" fill="none" stroke="#3b3a39" stroke-width="1.3"/>
 <rect x="64.2" y="19.8" width="5.3" height="10.6" fill="none" stroke="#3b3a39" stroke-width="1.3"/>
 <circle cx="115.4" cy="16.4" r="10.2" fill="none" stroke="#3b3a39" stroke-width="1.3"/>
 <path d="M122.8 23.8 L130 30.6" stroke="#3b3a39" stroke-width="1.4"/>
 <path d="M106 17.5 L110.5 15 L114.5 17 L123.5 11" fill="none" stroke="#3b3a39" stroke-width="1.2"/>
 <path d="M110 19 V25.5 M114 19.5 V26.5 M118 18 V26.5 M121.6 16 V24.5" stroke="#3b3a39" stroke-width="1.1"/>
</svg>
<div class="a" style="left:1493px;top:441px;width:50px;height:4px;background:#f2c811;border-radius:2px"></div>
<!-- scrollbar -->
<div class="a" style="left:1696px;top:444px;width:7px;height:366px;background:#c8c6c4;border-radius:3px"></div>
<!-- wells -->
<div class="a" style="left:1493.5px;top:453px;font-size:14.7px;line-height:18px;color:#252423">Location</div>
<div class="a" style="left:1483.5px;top:479px;width:211.5px;height:45.5px;background:#fff;border:1px dashed #c8c6c4"></div>
<div class="a" style="left:1487.5px;top:484.5px;width:204px;height:27px;background:#e9e8e7;border:1px solid #d2d0ce;border-radius:2px"></div>
<div class="a" style="left:1493.5px;top:489px;font-size:14.7px;line-height:18px;color:#252423">Country</div>
<svg class="a" style="left:1650px;top:490px" width="40" height="16" viewBox="0 0 40 16"><path d="M3 4 L9.5 10.5 L16 4" fill="none" stroke="#3b3a39" stroke-width="1.2"/><path d="M26 3 L35 12 M35 3 L26 12" stroke="#3b3a39" stroke-width="1.2"/></svg>
<div class="a" style="left:1493.5px;top:539px;font-size:14.7px;line-height:18px;color:#252423">Legend</div>
<div class="a" style="left:1483.5px;top:565px;width:211.5px;height:34.5px;background:#fff;border:1px dashed #c8c6c4"></div>
<div class="a" style="left:1497px;top:573px;font-size:14.9px;line-height:18px;color:#252423">Add data fields here</div>
<div class="a" style="left:1493.5px;top:614px;font-size:14.7px;line-height:18px;color:#252423">Latitude</div>
<div class="a" style="left:1483.5px;top:640px;width:211.5px;height:34.5px;background:#fff;border:1px dashed #c8c6c4"></div>
<div class="a" style="left:1497px;top:648px;font-size:14.9px;line-height:18px;color:#252423">Add data fields here</div>
<div class="a" style="left:1493.5px;top:689px;font-size:14.7px;line-height:18px;color:#252423">Longitude</div>
<div class="a" style="left:1483.5px;top:715px;width:211.5px;height:34.5px;background:#fff;border:1px dashed #c8c6c4"></div>
<div class="a" style="left:1497px;top:723px;font-size:14.9px;line-height:18px;color:#252423">Add data fields here</div>
<div class="a" style="left:1493.5px;top:764px;font-size:14.7px;line-height:18px;color:#252423">Size</div>
<div class="a" style="left:1483.5px;top:790.5px;width:211.5px;height:36px;background:#fff;border:1px dashed #c8c6c4"></div>
<div class="a" style="left:1487.5px;top:795.5px;width:204px;height:27px;background:#e9e8e7;border:1px solid #d2d0ce;border-radius:2px"></div>
<div class="a" style="left:1493.5px;top:800px;font-size:14.7px;line-height:18px;color:#252423">Discounts</div>
<svg class="a" style="left:1650px;top:801px" width="40" height="16" viewBox="0 0 40 16"><path d="M3 4 L9.5 10.5 L16 4" fill="none" stroke="#3b3a39" stroke-width="1.2"/><path d="M26 3 L35 12 M35 3 L26 12" stroke="#3b3a39" stroke-width="1.2"/></svg>
<div class="a" style="left:1493.5px;top:841px;font-size:14.7px;line-height:18px;color:#252423">Tooltips</div>
<div class="a" style="left:1483.5px;top:867.5px;width:211.5px;height:34px;background:#fff;border:1px dashed #c8c6c4"></div>
<div class="a" style="left:1497px;top:875px;font-size:14.9px;line-height:18px;color:#252423">Add data fields here</div>
<div class="a" style="left:1495.5px;top:920px;font-size:19.2px;line-height:22px;font-weight:bold;color:#323130">Drill through</div>

<!-- fields pane -->
<div class="a" style="left:1703px;top:158px;width:1px;height:798px;background:#d6d4d2"></div>
<div class="a" style="left:1719.5px;top:179.5px;font-size:19.4px;line-height:22px;font-weight:bold;color:#252423;transform:scaleX(0.915);transform-origin:0 0">Fields</div>
<svg class="a" style="left:1902px;top:177px" width="16" height="20" viewBox="0 0 16 20"><path d="M4 3 L11.5 10 L4 17" fill="none" stroke="#252423" stroke-width="1.3"/></svg>
<div class="a" style="left:1709.5px;top:220px;width:230px;height:32px;background:#fff;border:1px solid #8a8886;border-radius:2px"></div>
<svg class="a" style="left:1716px;top:225px" width="24" height="22" viewBox="0 0 24 22"><circle cx="14.5" cy="8" r="5.6" fill="none" stroke="#3b3a39" stroke-width="1.3"/><path d="M10.5 12 L3 19.5" stroke="#3b3a39" stroke-width="1.4"/></svg>
<div class="a" style="left:1746px;top:227px;font-size:16.5px;line-height:20px;color:#605e5c">Search</div>
<div class="a" style="left:1704px;top:259px;width:216px;height:1px;background:#e1dfdd"></div>
<svg class="a" style="left:1712px;top:277px" width="50" height="26" viewBox="0 0 50 26"><path d="M3 6.5 L9 12.5 L15 6.5" fill="none" stroke="#3b3a39" stroke-width="1.2"/><rect x="19.5" y="3" width="16" height="14" fill="#fafafa" stroke="#3b3a39" stroke-width="1.3"/><rect x="19.5" y="3" width="16" height="2.5" fill="#605e5c"/><path d="M19.5 9 H35.5 M19.5 13 H35.5 M24.8 5 V17 M30.2 5 V17" stroke="#3b3a39" stroke-width="1"/><circle cx="35.5" cy="18" r="7" fill="#f2c811"/><path d="M32.5 18 L34.8 20.3 L38.5 16" fill="none" stroke="#252423" stroke-width="1.3"/></svg>
<div class="a" style="left:1756px;top:278px;font-size:14.8px;line-height:18px;color:#252423">financials</div>
<svg class="a" style="left:1730px;top:305.6px" width="64" height="24" viewBox="0 0 64 24"><rect x="22.5" y="5.5" width="14" height="14" rx="1.5" fill="#fff" stroke="#8a8886" stroke-width="1.1"/><path d="M54.5 4.5 H43.5 L50 12.5 L43.5 20.5 H55" fill="none" stroke="#252423" stroke-width="1.3"/></svg>
<div class="a" style="left:1794.3px;top:308.4px;font-size:15px;line-height:18px;color:#252423">Sales</div>
<svg class="a" style="left:1730px;top:335.6px" width="64" height="24" viewBox="0 0 64 24"><rect x="22.5" y="5.5" width="14" height="14" rx="1.5" fill="#fff" stroke="#8a8886" stroke-width="1.1"/><path d="M54.5 4.5 H43.5 L50 12.5 L43.5 20.5 H55" fill="none" stroke="#252423" stroke-width="1.3"/></svg>
<div class="a" style="left:1794.3px;top:338.4px;font-size:15px;line-height:18px;color:#252423">COGS</div>
<svg class="a" style="left:1730px;top:365.6px" width="64" height="24" viewBox="0 0 64 24"><rect x="22" y="5" width="15" height="15" rx="1.5" fill="#f2c811"/><path d="M25.5 12.5 L28.5 15.5 L33.5 9.5" fill="none" stroke="#8a6a00" stroke-width="1.1"/></svg>
<div class="a" style="left:1794.3px;top:368.4px;font-size:15px;line-height:18px;color:#252423">Country</div>
<svg class="a" style="left:1730px;top:395.6px" width="64" height="24" viewBox="0 0 64 24"><rect x="22.5" y="5.5" width="14" height="14" rx="1.5" fill="#fff" stroke="#8a8886" stroke-width="1.1"/><path d="M5 7 L10 12.5 L5 18" fill="none" stroke="#3b3a39" stroke-width="1.2"/><rect x="39.5" y="5" width="19" height="16" fill="#fafafa" stroke="#3b3a39" stroke-width="1.3"/><rect x="39.5" y="5" width="19" height="3" fill="#605e5c"/><path d="M43 2 V6 M55 2 V6" stroke="#3b3a39" stroke-width="1.2"/><g fill="#8a8886"><rect x="42.0" y="10.0" width="1.6" height="1.6"/><rect x="45.3" y="10.0" width="1.6" height="1.6"/><rect x="48.6" y="10.0" width="1.6" height="1.6"/><rect x="51.9" y="10.0" width="1.6" height="1.6"/><rect x="55.2" y="10.0" width="1.6" height="1.6"/><rect x="42.0" y="13.0" width="1.6" height="1.6"/><rect x="45.3" y="13.0" width="1.6" height="1.6"/><rect x="48.6" y="13.0" width="1.6" height="1.6"/><rect x="51.9" y="13.0" width="1.6" height="1.6"/><rect x="55.2" y="13.0" width="1.6" height="1.6"/><rect x="42.0" y="16.0" width="1.6" height="1.6"/><rect x="45.3" y="16.0" width="1.6" height="1.6"/><rect x="48.6" y="16.0" width="1.6" height="1.6"/><rect x="51.9" y="16.0" width="1.6" height="1.6"/><rect x="55.2" y="16.0" width="1.6" height="1.6"/></g></svg>
<div class="a" style="left:1794.3px;top:398.4px;font-size:15px;line-height:18px;color:#252423">Date</div>
<svg class="a" style="left:1730px;top:425.6px" width="64" height="24" viewBox="0 0 64 24"><rect x="22.5" y="5.5" width="14" height="14" rx="1.5" fill="#fff" stroke="#8a8886" stroke-width="1.1"/></svg>
<div class="a" style="left:1794.3px;top:428.4px;font-size:15px;line-height:18px;color:#252423">Discount Band</div>
<svg class="a" style="left:1730px;top:455.7px" width="64" height="24" viewBox="0 0 64 24"><rect x="22" y="5" width="15" height="15" rx="1.5" fill="#f2c811"/><path d="M25.5 12.5 L28.5 15.5 L33.5 9.5" fill="none" stroke="#8a6a00" stroke-width="1.1"/><path d="M54.5 4.5 H43.5 L50 12.5 L43.5 20.5 H55" fill="none" stroke="#252423" stroke-width="1.3"/></svg>
<div class="a" style="left:1794.3px;top:458.5px;font-size:15px;line-height:18px;color:#252423">Discounts</div>
<svg class="a" style="left:1730px;top:485.7px" width="64" height="24" viewBox="0 0 64 24"><rect x="22.5" y="5.5" width="14" height="14" rx="1.5" fill="#fff" stroke="#8a8886" stroke-width="1.1"/><path d="M54.5 4.5 H43.5 L50 12.5 L43.5 20.5 H55" fill="none" stroke="#252423" stroke-width="1.3"/></svg>
<div class="a" style="left:1794.3px;top:488.5px;font-size:15px;line-height:18px;color:#252423">Gross Sales</div>
<svg class="a" style="left:1730px;top:515.7px" width="64" height="24" viewBox="0 0 64 24"><rect x="22.5" y="5.5" width="14" height="14" rx="1.5" fill="#fff" stroke="#8a8886" stroke-width="1.1"/><path d="M54.5 4.5 H43.5 L50 12.5 L43.5 20.5 H55" fill="none" stroke="#252423" stroke-width="1.3"/></svg>
<div class="a" style="left:1794.3px;top:518.5px;font-size:15px;line-height:18px;color:#252423">Manufacturing Pr...</div>
<svg class="a" style="left:1730px;top:545.7px" width="64" height="24" viewBox="0 0 64 24"><rect x="22.5" y="5.5" width="14" height="14" rx="1.5" fill="#fff" stroke="#8a8886" stroke-width="1.1"/></svg>
<div class="a" style="left:1794.3px;top:548.5px;font-size:15px;line-height:18px;color:#252423">Month</div>
<svg class="a" style="left:1730px;top:575.7px" width="64" height="24" viewBox="0 0 64 24"><rect x="22.5" y="5.5" width="14" height="14" rx="1.5" fill="#fff" stroke="#8a8886" stroke-width="1.1"/><path d="M54.5 4.5 H43.5 L50 12.5 L43.5 20.5 H55" fill="none" stroke="#252423" stroke-width="1.3"/></svg>
<div class="a" style="left:1794.3px;top:578.5px;font-size:15px;line-height:18px;color:#252423">Month Number</div>
<svg class="a" style="left:1730px;top:605.7px" width="64" height="24" viewBox="0 0 64 24"><rect x="22.5" y="5.5" width="14" height="14" rx="1.5" fill="#fff" stroke="#8a8886" stroke-width="1.1"/></svg>
<div class="a" style="left:1794.3px;top:608.5px;font-size:15px;line-height:18px;color:#252423">Product</div>
<svg class="a" style="left:1730px;top:635.7px" width="64" height="24" viewBox="0 0 64 24"><rect x="22.5" y="5.5" width="14" height="14" rx="1.5" fill="#fff" stroke="#8a8886" stroke-width="1.1"/><path d="M54.5 4.5 H43.5 L50 12.5 L43.5 20.5 H55" fill="none" stroke="#252423" stroke-width="1.3"/></svg>
<div class="a" style="left:1794.3px;top:638.5px;font-size:15px;line-height:18px;color:#252423">Profit</div>
<svg class="a" style="left:1730px;top:665.7px" width="64" height="24" viewBox="0 0 64 24"><rect x="22.5" y="5.5" width="14" height="14" rx="1.5" fill="#fff" stroke="#8a8886" stroke-width="1.1"/><path d="M54.5 4.5 H43.5 L50 12.5 L43.5 20.5 H55" fill="none" stroke="#252423" stroke-width="1.3"/></svg>
<div class="a" style="left:1794.3px;top:668.5px;font-size:15px;line-height:18px;color:#252423">Sale Price</div>
<svg class="a" style="left:1730px;top:695.7px" width="64" height="24" viewBox="0 0 64 24"><rect x="22.5" y="5.5" width="14" height="14" rx="1.5" fill="#fff" stroke="#8a8886" stroke-width="1.1"/></svg>
<div class="a" style="left:1794.3px;top:698.5px;font-size:15px;line-height:18px;color:#252423">Segment</div>
<svg class="a" style="left:1730px;top:725.7px" width="64" height="24" viewBox="0 0 64 24"><rect x="22.5" y="5.5" width="14" height="14" rx="1.5" fill="#fff" stroke="#8a8886" stroke-width="1.1"/><path d="M54.5 4.5 H43.5 L50 12.5 L43.5 20.5 H55" fill="none" stroke="#252423" stroke-width="1.3"/></svg>
<div class="a" style="left:1794.3px;top:728.5px;font-size:15px;line-height:18px;color:#252423">Units Sold</div>
<svg class="a" style="left:1730px;top:755.8px" width="64" height="24" viewBox="0 0 64 24"><rect x="22.5" y="5.5" width="14" height="14" rx="1.5" fill="#fff" stroke="#8a8886" stroke-width="1.1"/><path d="M54.5 4.5 H43.5 L50 12.5 L43.5 20.5 H55" fill="none" stroke="#252423" stroke-width="1.3"/></svg>
<div class="a" style="left:1794.3px;top:758.5px;font-size:15px;line-height:18px;color:#252423">Year</div>

<!-- status bar -->
<div class="a" style="left:10px;top:956px;width:1910px;height:1px;background:#d2d0ce"></div>
<div class="a" style="left:10px;top:957px;width:1910px;height:5px;background:#f3f2f1"></div>
</body></html>
